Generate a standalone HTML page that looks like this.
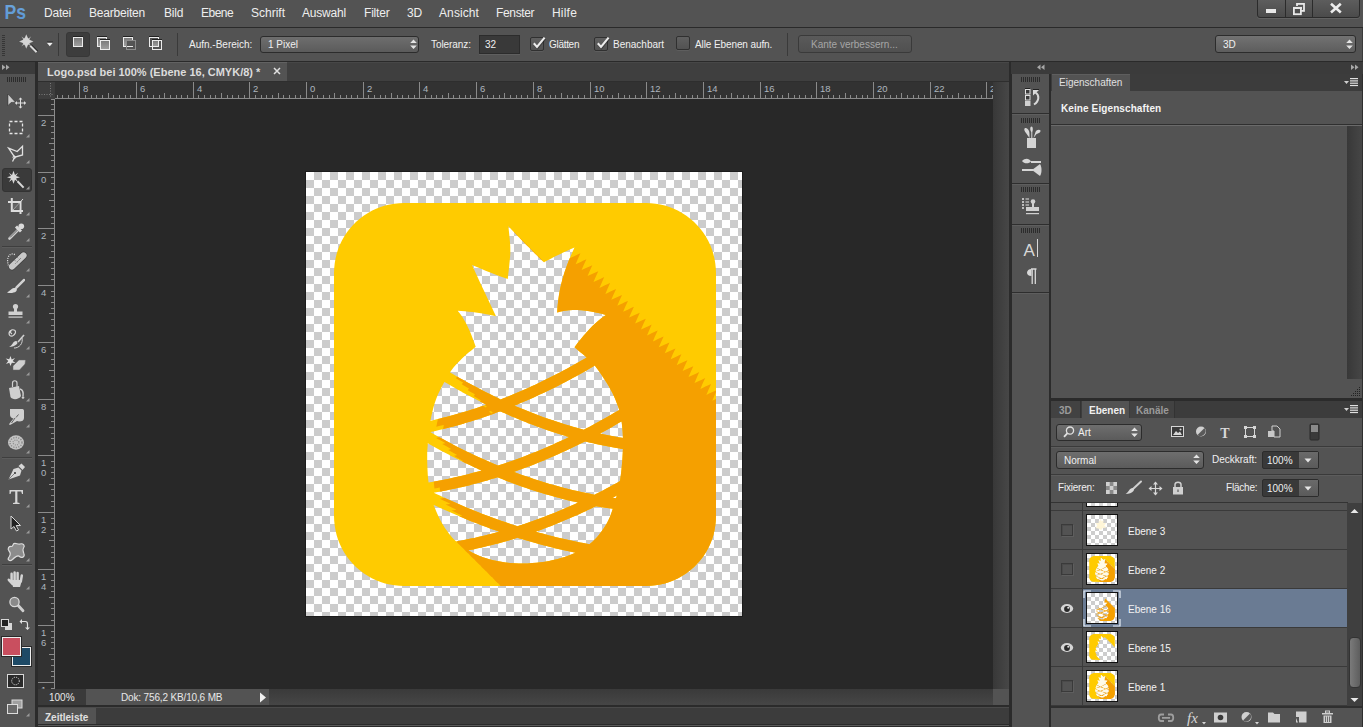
<!DOCTYPE html>
<html><head><meta charset="utf-8"><style>
html,body{margin:0;padding:0;width:1363px;height:727px;overflow:hidden;background:#2b2b2b}
div{position:absolute;box-sizing:border-box}
.t{font-family:"Liberation Sans", sans-serif;white-space:pre}
svg{overflow:visible}
</style></head><body>
<div style="left:0px;top:0px;width:1363px;height:27px;background:#535353"></div>
<div style="left:0px;top:27px;width:1363px;height:1px;background:#2a2a2a"></div>
<div style="left:0px;top:28px;width:1363px;height:33px;background:#535353"></div>
<div style="left:0px;top:61px;width:1363px;height:1px;background:#2a2a2a"></div>
<div style="left:0px;top:62px;width:1363px;height:665px;background:#2b2b2b"></div>
<div style="left:0px;top:62px;width:35px;height:12px;background:#3b3b3b"></div>
<div style="left:0px;top:74px;width:35px;height:653px;background:#535353"></div>
<div style="left:38px;top:62px;width:971px;height:20px;background:#3f3f3f"></div>
<div style="left:38px;top:62px;width:971px;height:1px;background:#474747"></div>
<div style="left:38px;top:62px;width:249px;height:19px;background:#535353"></div>
<div style="left:38px;top:62px;width:249px;height:1px;background:#626262"></div>
<div style="left:38px;top:81px;width:971px;height:1px;background:#2e2e2e"></div>
<div style="left:38px;top:82px;width:955px;height:17px;background:#323232"></div>
<div style="left:38px;top:99px;width:17px;height:590px;background:#323232"></div>
<div style="left:38px;top:82px;width:17px;height:17px;background:#3d3d3d"></div>
<div style="left:55px;top:99px;width:938px;height:590px;background:#282828"></div>
<div style="left:993px;top:82px;width:16px;height:607px;background:linear-gradient(90deg,#383838,#474747)"></div>
<div style="left:38px;top:689px;width:955px;height:16px;background:linear-gradient(180deg,#3a3a3a,#464646)"></div>
<div style="left:38px;top:689px;width:48px;height:16px;background:#3a3a3a"></div>
<div style="left:86px;top:689px;width:183px;height:16px;background:#535353"></div>
<div style="left:993px;top:689px;width:16px;height:16px;background:#535353"></div>
<div style="left:38px;top:707px;width:971px;height:1px;background:#4a4a4a"></div>
<div style="left:38px;top:708px;width:971px;height:16px;background:#3c3c3c"></div>
<div style="left:38px;top:708px;width:58px;height:16px;background:#535353"></div>
<div style="left:38px;top:725px;width:971px;height:1px;background:#5a5a5a"></div>
<div style="left:1011px;top:62px;width:352px;height:12px;background:#3b3b3b"></div>
<div style="left:1012px;top:74px;width:37px;height:653px;background:#535353"></div>
<div style="left:1051px;top:74px;width:312px;height:17px;background:#3c3c3c"></div>
<div style="left:1052px;top:74px;width:78px;height:17px;background:#535353"></div>
<div style="left:1051px;top:91px;width:312px;height:307px;background:#535353"></div>
<div style="left:1051px;top:401px;width:312px;height:17px;background:#3c3c3c"></div>
<div style="left:1051px;top:418px;width:312px;height:309px;background:#535353"></div>
<div style="left:55px;top:82px;width:938px;height:17px;overflow:hidden"><svg style="position:absolute;left:0;top:0" width="938" height="17"><rect x="0" y="16" width="938" height="1" fill="#8a8a8a"/><rect x="2" y="13" width="1" height="3" fill="#8a8a8a"/><rect x="7" y="13" width="1" height="3" fill="#8a8a8a"/><rect x="13" y="13" width="1" height="3" fill="#8a8a8a"/><rect x="19" y="13" width="1" height="3" fill="#8a8a8a"/><rect x="24" y="0" width="1" height="16" fill="#8a8a8a"/><text x="28" y="10" font-family="Liberation Sans" font-size="9.5" fill="#aeb6bf">8</text><rect x="30" y="13" width="1" height="3" fill="#8a8a8a"/><rect x="36" y="13" width="1" height="3" fill="#8a8a8a"/><rect x="41" y="13" width="1" height="3" fill="#8a8a8a"/><rect x="47" y="13" width="1" height="3" fill="#8a8a8a"/><rect x="53" y="11" width="1" height="5" fill="#8a8a8a"/><rect x="58" y="13" width="1" height="3" fill="#8a8a8a"/><rect x="64" y="13" width="1" height="3" fill="#8a8a8a"/><rect x="70" y="13" width="1" height="3" fill="#8a8a8a"/><rect x="75" y="13" width="1" height="3" fill="#8a8a8a"/><rect x="81" y="0" width="1" height="16" fill="#8a8a8a"/><text x="85" y="10" font-family="Liberation Sans" font-size="9.5" fill="#aeb6bf">6</text><rect x="87" y="13" width="1" height="3" fill="#8a8a8a"/><rect x="92" y="13" width="1" height="3" fill="#8a8a8a"/><rect x="98" y="13" width="1" height="3" fill="#8a8a8a"/><rect x="104" y="13" width="1" height="3" fill="#8a8a8a"/><rect x="109" y="11" width="1" height="5" fill="#8a8a8a"/><rect x="115" y="13" width="1" height="3" fill="#8a8a8a"/><rect x="121" y="13" width="1" height="3" fill="#8a8a8a"/><rect x="126" y="13" width="1" height="3" fill="#8a8a8a"/><rect x="132" y="13" width="1" height="3" fill="#8a8a8a"/><rect x="138" y="0" width="1" height="16" fill="#8a8a8a"/><text x="142" y="10" font-family="Liberation Sans" font-size="9.5" fill="#aeb6bf">4</text><rect x="143" y="13" width="1" height="3" fill="#8a8a8a"/><rect x="149" y="13" width="1" height="3" fill="#8a8a8a"/><rect x="155" y="13" width="1" height="3" fill="#8a8a8a"/><rect x="160" y="13" width="1" height="3" fill="#8a8a8a"/><rect x="166" y="11" width="1" height="5" fill="#8a8a8a"/><rect x="172" y="13" width="1" height="3" fill="#8a8a8a"/><rect x="177" y="13" width="1" height="3" fill="#8a8a8a"/><rect x="183" y="13" width="1" height="3" fill="#8a8a8a"/><rect x="189" y="13" width="1" height="3" fill="#8a8a8a"/><rect x="194" y="0" width="1" height="16" fill="#8a8a8a"/><text x="198" y="10" font-family="Liberation Sans" font-size="9.5" fill="#aeb6bf">2</text><rect x="200" y="13" width="1" height="3" fill="#8a8a8a"/><rect x="206" y="13" width="1" height="3" fill="#8a8a8a"/><rect x="211" y="13" width="1" height="3" fill="#8a8a8a"/><rect x="217" y="13" width="1" height="3" fill="#8a8a8a"/><rect x="223" y="11" width="1" height="5" fill="#8a8a8a"/><rect x="228" y="13" width="1" height="3" fill="#8a8a8a"/><rect x="234" y="13" width="1" height="3" fill="#8a8a8a"/><rect x="240" y="13" width="1" height="3" fill="#8a8a8a"/><rect x="245" y="13" width="1" height="3" fill="#8a8a8a"/><rect x="251" y="0" width="1" height="16" fill="#8a8a8a"/><text x="255" y="10" font-family="Liberation Sans" font-size="9.5" fill="#aeb6bf">0</text><rect x="257" y="13" width="1" height="3" fill="#8a8a8a"/><rect x="262" y="13" width="1" height="3" fill="#8a8a8a"/><rect x="268" y="13" width="1" height="3" fill="#8a8a8a"/><rect x="274" y="13" width="1" height="3" fill="#8a8a8a"/><rect x="279" y="11" width="1" height="5" fill="#8a8a8a"/><rect x="285" y="13" width="1" height="3" fill="#8a8a8a"/><rect x="291" y="13" width="1" height="3" fill="#8a8a8a"/><rect x="296" y="13" width="1" height="3" fill="#8a8a8a"/><rect x="302" y="13" width="1" height="3" fill="#8a8a8a"/><rect x="308" y="0" width="1" height="16" fill="#8a8a8a"/><text x="312" y="10" font-family="Liberation Sans" font-size="9.5" fill="#aeb6bf">2</text><rect x="313" y="13" width="1" height="3" fill="#8a8a8a"/><rect x="319" y="13" width="1" height="3" fill="#8a8a8a"/><rect x="325" y="13" width="1" height="3" fill="#8a8a8a"/><rect x="330" y="13" width="1" height="3" fill="#8a8a8a"/><rect x="336" y="11" width="1" height="5" fill="#8a8a8a"/><rect x="342" y="13" width="1" height="3" fill="#8a8a8a"/><rect x="347" y="13" width="1" height="3" fill="#8a8a8a"/><rect x="353" y="13" width="1" height="3" fill="#8a8a8a"/><rect x="359" y="13" width="1" height="3" fill="#8a8a8a"/><rect x="364" y="0" width="1" height="16" fill="#8a8a8a"/><text x="368" y="10" font-family="Liberation Sans" font-size="9.5" fill="#aeb6bf">4</text><rect x="370" y="13" width="1" height="3" fill="#8a8a8a"/><rect x="376" y="13" width="1" height="3" fill="#8a8a8a"/><rect x="381" y="13" width="1" height="3" fill="#8a8a8a"/><rect x="387" y="13" width="1" height="3" fill="#8a8a8a"/><rect x="393" y="11" width="1" height="5" fill="#8a8a8a"/><rect x="398" y="13" width="1" height="3" fill="#8a8a8a"/><rect x="404" y="13" width="1" height="3" fill="#8a8a8a"/><rect x="410" y="13" width="1" height="3" fill="#8a8a8a"/><rect x="415" y="13" width="1" height="3" fill="#8a8a8a"/><rect x="421" y="0" width="1" height="16" fill="#8a8a8a"/><text x="425" y="10" font-family="Liberation Sans" font-size="9.5" fill="#aeb6bf">6</text><rect x="427" y="13" width="1" height="3" fill="#8a8a8a"/><rect x="432" y="13" width="1" height="3" fill="#8a8a8a"/><rect x="438" y="13" width="1" height="3" fill="#8a8a8a"/><rect x="444" y="13" width="1" height="3" fill="#8a8a8a"/><rect x="449" y="11" width="1" height="5" fill="#8a8a8a"/><rect x="455" y="13" width="1" height="3" fill="#8a8a8a"/><rect x="461" y="13" width="1" height="3" fill="#8a8a8a"/><rect x="466" y="13" width="1" height="3" fill="#8a8a8a"/><rect x="472" y="13" width="1" height="3" fill="#8a8a8a"/><rect x="478" y="0" width="1" height="16" fill="#8a8a8a"/><text x="482" y="10" font-family="Liberation Sans" font-size="9.5" fill="#aeb6bf">8</text><rect x="483" y="13" width="1" height="3" fill="#8a8a8a"/><rect x="489" y="13" width="1" height="3" fill="#8a8a8a"/><rect x="495" y="13" width="1" height="3" fill="#8a8a8a"/><rect x="500" y="13" width="1" height="3" fill="#8a8a8a"/><rect x="506" y="11" width="1" height="5" fill="#8a8a8a"/><rect x="512" y="13" width="1" height="3" fill="#8a8a8a"/><rect x="517" y="13" width="1" height="3" fill="#8a8a8a"/><rect x="523" y="13" width="1" height="3" fill="#8a8a8a"/><rect x="529" y="13" width="1" height="3" fill="#8a8a8a"/><rect x="535" y="0" width="1" height="16" fill="#8a8a8a"/><text x="539" y="10" font-family="Liberation Sans" font-size="9.5" fill="#aeb6bf">10</text><rect x="540" y="13" width="1" height="3" fill="#8a8a8a"/><rect x="546" y="13" width="1" height="3" fill="#8a8a8a"/><rect x="552" y="13" width="1" height="3" fill="#8a8a8a"/><rect x="557" y="13" width="1" height="3" fill="#8a8a8a"/><rect x="563" y="11" width="1" height="5" fill="#8a8a8a"/><rect x="569" y="13" width="1" height="3" fill="#8a8a8a"/><rect x="574" y="13" width="1" height="3" fill="#8a8a8a"/><rect x="580" y="13" width="1" height="3" fill="#8a8a8a"/><rect x="586" y="13" width="1" height="3" fill="#8a8a8a"/><rect x="591" y="0" width="1" height="16" fill="#8a8a8a"/><text x="595" y="10" font-family="Liberation Sans" font-size="9.5" fill="#aeb6bf">12</text><rect x="597" y="13" width="1" height="3" fill="#8a8a8a"/><rect x="603" y="13" width="1" height="3" fill="#8a8a8a"/><rect x="608" y="13" width="1" height="3" fill="#8a8a8a"/><rect x="614" y="13" width="1" height="3" fill="#8a8a8a"/><rect x="620" y="11" width="1" height="5" fill="#8a8a8a"/><rect x="625" y="13" width="1" height="3" fill="#8a8a8a"/><rect x="631" y="13" width="1" height="3" fill="#8a8a8a"/><rect x="637" y="13" width="1" height="3" fill="#8a8a8a"/><rect x="642" y="13" width="1" height="3" fill="#8a8a8a"/><rect x="648" y="0" width="1" height="16" fill="#8a8a8a"/><text x="652" y="10" font-family="Liberation Sans" font-size="9.5" fill="#aeb6bf">14</text><rect x="654" y="13" width="1" height="3" fill="#8a8a8a"/><rect x="659" y="13" width="1" height="3" fill="#8a8a8a"/><rect x="665" y="13" width="1" height="3" fill="#8a8a8a"/><rect x="671" y="13" width="1" height="3" fill="#8a8a8a"/><rect x="676" y="11" width="1" height="5" fill="#8a8a8a"/><rect x="682" y="13" width="1" height="3" fill="#8a8a8a"/><rect x="688" y="13" width="1" height="3" fill="#8a8a8a"/><rect x="693" y="13" width="1" height="3" fill="#8a8a8a"/><rect x="699" y="13" width="1" height="3" fill="#8a8a8a"/><rect x="705" y="0" width="1" height="16" fill="#8a8a8a"/><text x="709" y="10" font-family="Liberation Sans" font-size="9.5" fill="#aeb6bf">16</text><rect x="710" y="13" width="1" height="3" fill="#8a8a8a"/><rect x="716" y="13" width="1" height="3" fill="#8a8a8a"/><rect x="722" y="13" width="1" height="3" fill="#8a8a8a"/><rect x="727" y="13" width="1" height="3" fill="#8a8a8a"/><rect x="733" y="11" width="1" height="5" fill="#8a8a8a"/><rect x="739" y="13" width="1" height="3" fill="#8a8a8a"/><rect x="744" y="13" width="1" height="3" fill="#8a8a8a"/><rect x="750" y="13" width="1" height="3" fill="#8a8a8a"/><rect x="756" y="13" width="1" height="3" fill="#8a8a8a"/><rect x="761" y="0" width="1" height="16" fill="#8a8a8a"/><text x="765" y="10" font-family="Liberation Sans" font-size="9.5" fill="#aeb6bf">18</text><rect x="767" y="13" width="1" height="3" fill="#8a8a8a"/><rect x="773" y="13" width="1" height="3" fill="#8a8a8a"/><rect x="778" y="13" width="1" height="3" fill="#8a8a8a"/><rect x="784" y="13" width="1" height="3" fill="#8a8a8a"/><rect x="790" y="11" width="1" height="5" fill="#8a8a8a"/><rect x="795" y="13" width="1" height="3" fill="#8a8a8a"/><rect x="801" y="13" width="1" height="3" fill="#8a8a8a"/><rect x="807" y="13" width="1" height="3" fill="#8a8a8a"/><rect x="812" y="13" width="1" height="3" fill="#8a8a8a"/><rect x="818" y="0" width="1" height="16" fill="#8a8a8a"/><text x="822" y="10" font-family="Liberation Sans" font-size="9.5" fill="#aeb6bf">20</text><rect x="824" y="13" width="1" height="3" fill="#8a8a8a"/><rect x="829" y="13" width="1" height="3" fill="#8a8a8a"/><rect x="835" y="13" width="1" height="3" fill="#8a8a8a"/><rect x="841" y="13" width="1" height="3" fill="#8a8a8a"/><rect x="846" y="11" width="1" height="5" fill="#8a8a8a"/><rect x="852" y="13" width="1" height="3" fill="#8a8a8a"/><rect x="858" y="13" width="1" height="3" fill="#8a8a8a"/><rect x="863" y="13" width="1" height="3" fill="#8a8a8a"/><rect x="869" y="13" width="1" height="3" fill="#8a8a8a"/><rect x="875" y="0" width="1" height="16" fill="#8a8a8a"/><text x="879" y="10" font-family="Liberation Sans" font-size="9.5" fill="#aeb6bf">22</text><rect x="880" y="13" width="1" height="3" fill="#8a8a8a"/><rect x="886" y="13" width="1" height="3" fill="#8a8a8a"/><rect x="892" y="13" width="1" height="3" fill="#8a8a8a"/><rect x="897" y="13" width="1" height="3" fill="#8a8a8a"/><rect x="903" y="11" width="1" height="5" fill="#8a8a8a"/><rect x="909" y="13" width="1" height="3" fill="#8a8a8a"/><rect x="914" y="13" width="1" height="3" fill="#8a8a8a"/><rect x="920" y="13" width="1" height="3" fill="#8a8a8a"/><rect x="926" y="13" width="1" height="3" fill="#8a8a8a"/><rect x="931" y="0" width="1" height="16" fill="#8a8a8a"/><text x="935" y="10" font-family="Liberation Sans" font-size="9.5" fill="#aeb6bf">24</text><rect x="937" y="13" width="1" height="3" fill="#8a8a8a"/></svg></div>
<div style="left:38px;top:99px;width:17px;height:590px;overflow:hidden"><svg style="position:absolute;left:0;top:0" width="17" height="590"><rect x="16" y="0" width="1" height="590" fill="#8a8a8a"/><rect x="13" y="-28" width="3" height="1" fill="#8a8a8a"/><rect x="13" y="-23" width="3" height="1" fill="#8a8a8a"/><rect x="13" y="-17" width="3" height="1" fill="#8a8a8a"/><rect x="11" y="-11" width="5" height="1" fill="#8a8a8a"/><rect x="13" y="-6" width="3" height="1" fill="#8a8a8a"/><rect x="13" y="0" width="3" height="1" fill="#8a8a8a"/><rect x="13" y="5" width="3" height="1" fill="#8a8a8a"/><rect x="13" y="10" width="3" height="1" fill="#8a8a8a"/><rect x="0" y="16" width="16" height="1" fill="#8a8a8a"/><text x="3" y="27" font-family="Liberation Sans" font-size="9.5" fill="#aeb6bf">2</text><rect x="13" y="22" width="3" height="1" fill="#8a8a8a"/><rect x="13" y="27" width="3" height="1" fill="#8a8a8a"/><rect x="13" y="33" width="3" height="1" fill="#8a8a8a"/><rect x="13" y="39" width="3" height="1" fill="#8a8a8a"/><rect x="11" y="44" width="5" height="1" fill="#8a8a8a"/><rect x="13" y="50" width="3" height="1" fill="#8a8a8a"/><rect x="13" y="56" width="3" height="1" fill="#8a8a8a"/><rect x="13" y="61" width="3" height="1" fill="#8a8a8a"/><rect x="13" y="67" width="3" height="1" fill="#8a8a8a"/><rect x="0" y="73" width="16" height="1" fill="#8a8a8a"/><text x="3" y="84" font-family="Liberation Sans" font-size="9.5" fill="#aeb6bf">0</text><rect x="13" y="78" width="3" height="1" fill="#8a8a8a"/><rect x="13" y="84" width="3" height="1" fill="#8a8a8a"/><rect x="13" y="90" width="3" height="1" fill="#8a8a8a"/><rect x="13" y="95" width="3" height="1" fill="#8a8a8a"/><rect x="11" y="101" width="5" height="1" fill="#8a8a8a"/><rect x="13" y="107" width="3" height="1" fill="#8a8a8a"/><rect x="13" y="112" width="3" height="1" fill="#8a8a8a"/><rect x="13" y="118" width="3" height="1" fill="#8a8a8a"/><rect x="13" y="124" width="3" height="1" fill="#8a8a8a"/><rect x="0" y="129" width="16" height="1" fill="#8a8a8a"/><text x="3" y="140" font-family="Liberation Sans" font-size="9.5" fill="#aeb6bf">2</text><rect x="13" y="135" width="3" height="1" fill="#8a8a8a"/><rect x="13" y="141" width="3" height="1" fill="#8a8a8a"/><rect x="13" y="146" width="3" height="1" fill="#8a8a8a"/><rect x="13" y="152" width="3" height="1" fill="#8a8a8a"/><rect x="11" y="158" width="5" height="1" fill="#8a8a8a"/><rect x="13" y="163" width="3" height="1" fill="#8a8a8a"/><rect x="13" y="169" width="3" height="1" fill="#8a8a8a"/><rect x="13" y="175" width="3" height="1" fill="#8a8a8a"/><rect x="13" y="180" width="3" height="1" fill="#8a8a8a"/><rect x="0" y="186" width="16" height="1" fill="#8a8a8a"/><text x="3" y="197" font-family="Liberation Sans" font-size="9.5" fill="#aeb6bf">4</text><rect x="13" y="192" width="3" height="1" fill="#8a8a8a"/><rect x="13" y="197" width="3" height="1" fill="#8a8a8a"/><rect x="13" y="203" width="3" height="1" fill="#8a8a8a"/><rect x="13" y="209" width="3" height="1" fill="#8a8a8a"/><rect x="11" y="214" width="5" height="1" fill="#8a8a8a"/><rect x="13" y="220" width="3" height="1" fill="#8a8a8a"/><rect x="13" y="226" width="3" height="1" fill="#8a8a8a"/><rect x="13" y="231" width="3" height="1" fill="#8a8a8a"/><rect x="13" y="237" width="3" height="1" fill="#8a8a8a"/><rect x="0" y="243" width="16" height="1" fill="#8a8a8a"/><text x="3" y="254" font-family="Liberation Sans" font-size="9.5" fill="#aeb6bf">6</text><rect x="13" y="248" width="3" height="1" fill="#8a8a8a"/><rect x="13" y="254" width="3" height="1" fill="#8a8a8a"/><rect x="13" y="260" width="3" height="1" fill="#8a8a8a"/><rect x="13" y="265" width="3" height="1" fill="#8a8a8a"/><rect x="11" y="271" width="5" height="1" fill="#8a8a8a"/><rect x="13" y="277" width="3" height="1" fill="#8a8a8a"/><rect x="13" y="282" width="3" height="1" fill="#8a8a8a"/><rect x="13" y="288" width="3" height="1" fill="#8a8a8a"/><rect x="13" y="294" width="3" height="1" fill="#8a8a8a"/><rect x="0" y="300" width="16" height="1" fill="#8a8a8a"/><text x="3" y="311" font-family="Liberation Sans" font-size="9.5" fill="#aeb6bf">8</text><rect x="13" y="305" width="3" height="1" fill="#8a8a8a"/><rect x="13" y="311" width="3" height="1" fill="#8a8a8a"/><rect x="13" y="317" width="3" height="1" fill="#8a8a8a"/><rect x="13" y="322" width="3" height="1" fill="#8a8a8a"/><rect x="11" y="328" width="5" height="1" fill="#8a8a8a"/><rect x="13" y="334" width="3" height="1" fill="#8a8a8a"/><rect x="13" y="339" width="3" height="1" fill="#8a8a8a"/><rect x="13" y="345" width="3" height="1" fill="#8a8a8a"/><rect x="13" y="351" width="3" height="1" fill="#8a8a8a"/><rect x="0" y="356" width="16" height="1" fill="#8a8a8a"/><text x="3" y="367" font-family="Liberation Sans" font-size="9.5" fill="#aeb6bf">1</text><text x="3" y="377" font-family="Liberation Sans" font-size="9.5" fill="#aeb6bf">0</text><rect x="13" y="362" width="3" height="1" fill="#8a8a8a"/><rect x="13" y="368" width="3" height="1" fill="#8a8a8a"/><rect x="13" y="373" width="3" height="1" fill="#8a8a8a"/><rect x="13" y="379" width="3" height="1" fill="#8a8a8a"/><rect x="11" y="385" width="5" height="1" fill="#8a8a8a"/><rect x="13" y="390" width="3" height="1" fill="#8a8a8a"/><rect x="13" y="396" width="3" height="1" fill="#8a8a8a"/><rect x="13" y="402" width="3" height="1" fill="#8a8a8a"/><rect x="13" y="407" width="3" height="1" fill="#8a8a8a"/><rect x="0" y="413" width="16" height="1" fill="#8a8a8a"/><text x="3" y="424" font-family="Liberation Sans" font-size="9.5" fill="#aeb6bf">1</text><text x="3" y="434" font-family="Liberation Sans" font-size="9.5" fill="#aeb6bf">2</text><rect x="13" y="419" width="3" height="1" fill="#8a8a8a"/><rect x="13" y="424" width="3" height="1" fill="#8a8a8a"/><rect x="13" y="430" width="3" height="1" fill="#8a8a8a"/><rect x="13" y="436" width="3" height="1" fill="#8a8a8a"/><rect x="11" y="441" width="5" height="1" fill="#8a8a8a"/><rect x="13" y="447" width="3" height="1" fill="#8a8a8a"/><rect x="13" y="453" width="3" height="1" fill="#8a8a8a"/><rect x="13" y="458" width="3" height="1" fill="#8a8a8a"/><rect x="13" y="464" width="3" height="1" fill="#8a8a8a"/><rect x="0" y="470" width="16" height="1" fill="#8a8a8a"/><text x="3" y="481" font-family="Liberation Sans" font-size="9.5" fill="#aeb6bf">1</text><text x="3" y="491" font-family="Liberation Sans" font-size="9.5" fill="#aeb6bf">4</text><rect x="13" y="475" width="3" height="1" fill="#8a8a8a"/><rect x="13" y="481" width="3" height="1" fill="#8a8a8a"/><rect x="13" y="487" width="3" height="1" fill="#8a8a8a"/><rect x="13" y="492" width="3" height="1" fill="#8a8a8a"/><rect x="11" y="498" width="5" height="1" fill="#8a8a8a"/><rect x="13" y="504" width="3" height="1" fill="#8a8a8a"/><rect x="13" y="509" width="3" height="1" fill="#8a8a8a"/><rect x="13" y="515" width="3" height="1" fill="#8a8a8a"/><rect x="13" y="521" width="3" height="1" fill="#8a8a8a"/><rect x="0" y="526" width="16" height="1" fill="#8a8a8a"/><text x="3" y="537" font-family="Liberation Sans" font-size="9.5" fill="#aeb6bf">1</text><text x="3" y="547" font-family="Liberation Sans" font-size="9.5" fill="#aeb6bf">6</text><rect x="13" y="532" width="3" height="1" fill="#8a8a8a"/><rect x="13" y="538" width="3" height="1" fill="#8a8a8a"/><rect x="13" y="543" width="3" height="1" fill="#8a8a8a"/><rect x="13" y="549" width="3" height="1" fill="#8a8a8a"/><rect x="11" y="555" width="5" height="1" fill="#8a8a8a"/><rect x="13" y="560" width="3" height="1" fill="#8a8a8a"/><rect x="13" y="566" width="3" height="1" fill="#8a8a8a"/><rect x="13" y="572" width="3" height="1" fill="#8a8a8a"/><rect x="13" y="577" width="3" height="1" fill="#8a8a8a"/><rect x="0" y="583" width="16" height="1" fill="#8a8a8a"/><text x="3" y="594" font-family="Liberation Sans" font-size="9.5" fill="#aeb6bf">1</text><text x="3" y="604" font-family="Liberation Sans" font-size="9.5" fill="#aeb6bf">8</text><rect x="13" y="589" width="3" height="1" fill="#8a8a8a"/><rect x="13" y="594" width="3" height="1" fill="#8a8a8a"/></svg></div>
<svg style="position:absolute;left:0px;top:0px;" width="60" height="100" viewBox="0 0 60 100"><rect x="38" y="82" width="16" height="16" fill="#3e3e3e"/><path d="M50.5 83 V97 M39 94.5 H53" stroke="#7a7a7a" stroke-width="1" stroke-dasharray="1 1.5"/></svg>
<svg style="position:absolute;left:0px;top:0px;" width="34" height="26" viewBox="0 0 34 26"><defs><linearGradient id="psg" x1="0" y1="0" x2="0" y2="1"><stop offset="0" stop-color="#6fa6dc"/><stop offset="1" stop-color="#5895d4"/></linearGradient></defs><text x="4.5" y="19.2" font-family="Liberation Sans" font-weight="bold" font-size="21" fill="url(#psg)" textLength="21.5" lengthAdjust="spacingAndGlyphs">Ps</text></svg>
<div class="t" style="left:44px;top:6.84px;font-size:12px;line-height:12px;color:#eeeeee;font-weight:normal;letter-spacing:-0.2px">Datei</div>
<div class="t" style="left:89px;top:6.84px;font-size:12px;line-height:12px;color:#eeeeee;font-weight:normal;letter-spacing:-0.2px">Bearbeiten</div>
<div class="t" style="left:164px;top:6.84px;font-size:12px;line-height:12px;color:#eeeeee;font-weight:normal;letter-spacing:-0.2px">Bild</div>
<div class="t" style="left:201px;top:6.84px;font-size:12px;line-height:12px;color:#eeeeee;font-weight:normal;letter-spacing:-0.5px">Ebene</div>
<div class="t" style="left:251px;top:6.84px;font-size:12px;line-height:12px;color:#eeeeee;font-weight:normal;letter-spacing:0px">Schrift</div>
<div class="t" style="left:302px;top:6.84px;font-size:12px;line-height:12px;color:#eeeeee;font-weight:normal;letter-spacing:-0.2px">Auswahl</div>
<div class="t" style="left:364px;top:6.84px;font-size:12px;line-height:12px;color:#eeeeee;font-weight:normal;letter-spacing:-0.2px">Filter</div>
<div class="t" style="left:407px;top:6.84px;font-size:12px;line-height:12px;color:#eeeeee;font-weight:normal;letter-spacing:-0.2px">3D</div>
<div class="t" style="left:439px;top:6.84px;font-size:12px;line-height:12px;color:#eeeeee;font-weight:normal;letter-spacing:0.1px">Ansicht</div>
<div class="t" style="left:496px;top:6.84px;font-size:12px;line-height:12px;color:#eeeeee;font-weight:normal;letter-spacing:-0.35px">Fenster</div>
<div class="t" style="left:552px;top:6.84px;font-size:12px;line-height:12px;color:#eeeeee;font-weight:normal;letter-spacing:0.2px">Hilfe</div>
<div style="left:1257px;top:-3px;width:103px;height:21px;background:linear-gradient(#5f5f5f,#4b4b4b);border:1px solid #2b2b2b;border-radius:0 0 3px 3px;box-shadow:0 1px 0 #626262"></div>
<div style="left:1285px;top:0px;width:1px;height:17px;background:#2b2b2b"></div>
<div style="left:1312px;top:0px;width:1px;height:17px;background:#2b2b2b"></div>
<div style="left:1266px;top:9px;width:10px;height:4px;background:#e8e8e8"></div>
<svg style="position:absolute;left:1292px;top:2px;" width="14" height="13" viewBox="0 0 14 13"><rect x="5" y="1.9" width="7" height="7" fill="none" stroke="#e8e8e8" stroke-width="1.8"/><rect x="0" y="4" width="9" height="8.5" fill="#4f4f4f"/><rect x="1.9" y="5.8" width="7" height="6.4" fill="none" stroke="#e8e8e8" stroke-width="1.8"/><rect x="1" y="5" width="9" height="2" fill="#e8e8e8"/></svg>
<svg style="position:absolute;left:1330px;top:3px;" width="12" height="10" viewBox="0 0 12 10"><path d="M1 0.8 L10.8 9.5 M10.8 0.8 L1 9.5" stroke="#ececec" stroke-width="2.6"/></svg>
<svg style="position:absolute;left:2px;top:35px;" width="3" height="21" viewBox="0 0 3 21"><rect x="0" y="0" width="3" height="1" fill="#363636"/><rect x="0" y="2" width="3" height="1" fill="#363636"/><rect x="0" y="4" width="3" height="1" fill="#363636"/><rect x="0" y="6" width="3" height="1" fill="#363636"/><rect x="0" y="8" width="3" height="1" fill="#363636"/><rect x="0" y="10" width="3" height="1" fill="#363636"/><rect x="0" y="12" width="3" height="1" fill="#363636"/><rect x="0" y="14" width="3" height="1" fill="#363636"/><rect x="0" y="16" width="3" height="1" fill="#363636"/><rect x="0" y="18" width="3" height="1" fill="#363636"/><rect x="0" y="20" width="3" height="1" fill="#363636"/></svg>
<svg style="position:absolute;left:16px;top:32px;" width="24" height="24" viewBox="0 0 24 24"><g transform="translate(10.3,9.4)">
<path d="M0,-7.5 L2,-3 L5.3,-5.3 L3,-2 L7.5,0 L3,2 L5.3,5.3 L2,3 L0,7.5 L-2,3 L-5.3,5.3 L-3,2 L-7.5,0 L-3,-2 L-5.3,-5.3 L-2,-3Z" fill="#d4d4d4" stroke="#2a2a2a" stroke-width="0.5" stroke-opacity="0.5"/><circle r="3.5" fill="#d4d4d4"/></g>
<path d="M14.5 13.5 L21 20" stroke="#2a2a2a" stroke-width="3.2"/><path d="M14.2 13.8 L20.6 20.2" stroke="#dadada" stroke-width="2"/></svg>
<svg style="position:absolute;left:46px;top:41px;" width="8" height="6" viewBox="0 0 8 6"><rect x="1" y="0.6" width="6" height="1" fill="#222"/><path d="M0.8 1.8 L6.8 1.8 L3.8 5.2Z" fill="#f0f0f0"/></svg>
<div style="left:58px;top:33px;width:1px;height:23px;background:#3a3a3a"></div>
<div style="left:66px;top:32px;width:24px;height:25px;background:#3d3d3d;border:1px solid #373737;border-radius:3px"></div>
<svg style="position:absolute;left:64px;top:30px;" width="106" height="28" viewBox="0 0 106 28"><defs><linearGradient id="sqg" x1="0" y1="0" x2="0" y2="1"><stop offset="0" stop-color="#7a7a7a"/><stop offset="1" stop-color="#a0a0a0"/></linearGradient></defs><rect x="9.5" y="7.5" width="9" height="9" fill="url(#sqg)" stroke="#ececec" stroke-width="1"/><line x1="9" y1="6.5" x2="19" y2="6.5" stroke="#222" stroke-width="1"/><rect x="33.5" y="7.5" width="9" height="9" fill="url(#sqg)" stroke="#ececec" stroke-width="1"/><line x1="33" y1="6.5" x2="43" y2="6.5" stroke="#222" stroke-width="1"/><rect x="36.5" y="10.5" width="9" height="9" fill="url(#sqg)" stroke="#ececec" stroke-width="1"/><line x1="36" y1="9.5" x2="46" y2="9.5" stroke="#222" stroke-width="1"/><rect x="62.5" y="10.5" width="9" height="9" fill="none" stroke="#8c8c8c"/><rect x="59.5" y="7.5" width="9" height="9" fill="url(#sqg)" stroke="#ececec" stroke-width="1"/><line x1="59" y1="6.5" x2="69" y2="6.5" stroke="#222" stroke-width="1"/><rect x="62" y="10" width="7" height="6" fill="#555"/><rect x="62.5" y="10.5" width="9" height="9" fill="none" stroke="#8c8c8c"/><rect x="88.5" y="10.5" width="6" height="6" fill="url(#sqg)"/><rect x="85.5" y="7.5" width="9" height="9" fill="none" stroke="#ececec" stroke-width="1"/><line x1="85" y1="6.5" x2="95" y2="6.5" stroke="#222" stroke-width="1"/><rect x="88.5" y="10.5" width="9" height="9" fill="none" stroke="#ececec" stroke-width="1"/><line x1="88" y1="9.5" x2="98" y2="9.5" stroke="#222" stroke-width="1"/></svg>
<div style="left:177px;top:33px;width:1px;height:23px;background:#3a3a3a"></div>
<div class="t" style="left:189px;top:39.53px;font-size:10px;line-height:10px;color:#f0f0f0;font-weight:normal;">Aufn.-Bereich:</div>
<div style="left:260px;top:36px;width:159px;height:17px;background:linear-gradient(#6e6e6e,#5b5b5b);border:1px solid #2c2c2c;border-radius:3px"></div>
<div class="t" style="left:268px;top:39.53px;font-size:10px;line-height:10px;color:#f0f0f0;font-weight:normal;">1 Pixel</div>
<svg style="position:absolute;left:410px;top:39px;" width="7" height="11" viewBox="0 0 7 11"><path d="M0.2 4 L3.5 0.5 L6.8 4Z M0.2 6.5 L3.5 10 L6.8 6.5Z" fill="#e4e4e4"/></svg>
<div class="t" style="left:431px;top:39.53px;font-size:10px;line-height:10px;color:#f0f0f0;font-weight:normal;letter-spacing:-0.08px">Toleranz:</div>
<div style="left:479px;top:35px;width:41px;height:19px;background:#393939;border:1px solid #2c2c2c;box-shadow:0 1px 0 #5f5f5f"></div>
<div class="t" style="left:485px;top:39.53px;font-size:10px;line-height:10px;color:#f0f0f0;font-weight:normal;">32</div>
<div style="left:530px;top:37px;width:14px;height:14px;background:linear-gradient(#606060,#525252);border:1px solid #303030;border-radius:2px;box-shadow:0 1px 0 #5e5e5e"></div>
<svg style="position:absolute;left:530px;top:35px;" width="16" height="16" viewBox="0 0 16 16"><path d="M3.8 8.6 L7 12.4 L14.8 3" fill="none" stroke="#222" stroke-width="2.4" opacity="0.45" transform="translate(0.4,0.6)"/><path d="M3.8 8.2 L7 11.9 L14.6 2.6" fill="none" stroke="#ececec" stroke-width="2.1"/></svg>
<div class="t" style="left:549px;top:39.53px;font-size:10px;line-height:10px;color:#f0f0f0;font-weight:normal;letter-spacing:-0.3px">Glätten</div>
<div style="left:594px;top:37px;width:14px;height:14px;background:linear-gradient(#606060,#525252);border:1px solid #303030;border-radius:2px;box-shadow:0 1px 0 #5e5e5e"></div>
<svg style="position:absolute;left:594px;top:35px;" width="16" height="16" viewBox="0 0 16 16"><path d="M3.8 8.6 L7 12.4 L14.8 3" fill="none" stroke="#222" stroke-width="2.4" opacity="0.45" transform="translate(0.4,0.6)"/><path d="M3.8 8.2 L7 11.9 L14.6 2.6" fill="none" stroke="#ececec" stroke-width="2.1"/></svg>
<div class="t" style="left:613px;top:39.53px;font-size:10px;line-height:10px;color:#f0f0f0;font-weight:normal;">Benachbart</div>
<div style="left:676px;top:36px;width:14px;height:14px;background:linear-gradient(#606060,#525252);border:1px solid #303030;border-radius:2px;box-shadow:0 1px 0 #5e5e5e"></div>
<div class="t" style="left:695px;top:39.53px;font-size:10px;line-height:10px;color:#f0f0f0;font-weight:normal;letter-spacing:-0.1px">Alle Ebenen aufn.</div>
<div style="left:787px;top:33px;width:1px;height:23px;background:#3a3a3a"></div>
<div style="left:798px;top:35px;width:114px;height:18px;background:linear-gradient(#5a5a5a,#505050);border:1px solid #3a3a3a;border-radius:3px"></div>
<div class="t" style="left:811px;top:39.53px;font-size:10px;line-height:10px;color:#a6a6a6;font-weight:normal;">Kante verbessern...</div>
<div style="left:1215px;top:35px;width:141px;height:18px;background:linear-gradient(#727272,#5d5d5d);border:1px solid #2c2c2c;border-radius:3px"></div>
<div class="t" style="left:1223px;top:39.53px;font-size:10px;line-height:10px;color:#f0f0f0;font-weight:normal;">3D</div>
<svg style="position:absolute;left:1346px;top:39px;" width="7" height="11" viewBox="0 0 7 11"><path d="M0.2 4 L3.5 0.5 L6.8 4Z M0.2 6.5 L3.5 10 L6.8 6.5Z" fill="#e4e4e4"/></svg>
<div class="t" style="left:47px;top:66.69px;font-size:11px;line-height:11px;color:#dcdcdc;font-weight:bold;">Logo.psd bei 100% (Ebene 16, CMYK/8) *</div>
<svg style="position:absolute;left:273px;top:67px;" width="8" height="8" viewBox="0 0 8 8"><path d="M1 1 L7 7 M7 1 L1 7" stroke="#e0e0e0" stroke-width="1.5"/></svg>
<div class="t" style="left:49px;top:692.53px;font-size:10px;line-height:10px;color:#e8e8e8;font-weight:normal;">100%</div>
<div class="t" style="left:121px;top:692.53px;font-size:10px;line-height:10px;color:#e8e8e8;font-weight:normal;letter-spacing:-0.15px">Dok: 756,2 KB/10,6 MB</div>
<svg style="position:absolute;left:259px;top:692px;" width="8" height="11" viewBox="0 0 8 11"><path d="M1 0.5 L7 5.5 L1 10.5Z" fill="#f0f0f0"/></svg>
<div class="t" style="left:45px;top:712.53px;font-size:10px;line-height:10px;color:#e0e0e0;font-weight:bold;">Zeitleiste</div>
<div class="t" style="left:1059px;top:77.53px;font-size:10px;line-height:10px;color:#e0e0e0;font-weight:normal;">Eigenschaften</div>
<div class="t" style="left:1061px;top:103.53px;font-size:10px;line-height:10px;color:#f4f4f4;font-weight:bold;letter-spacing:0.1px">Keine Eigenschaften</div>
<svg style="position:absolute;left:2px;top:64px;" width="9" height="7" viewBox="0 0 9 7"><path d="M0 0.5 L3.5 3.2 L0 6Z M4 0.5 L7.5 3.2 L4 6Z" fill="#a8a8a8"/></svg>
<svg style="position:absolute;left:7px;top:77px;" width="20" height="5" viewBox="0 0 20 5"><rect x="0" y="0" width="1" height="5" fill="#2c2c2c"/><rect x="2" y="0" width="1" height="5" fill="#2c2c2c"/><rect x="4" y="0" width="1" height="5" fill="#2c2c2c"/><rect x="6" y="0" width="1" height="5" fill="#2c2c2c"/><rect x="8" y="0" width="1" height="5" fill="#2c2c2c"/><rect x="10" y="0" width="1" height="5" fill="#2c2c2c"/><rect x="12" y="0" width="1" height="5" fill="#2c2c2c"/><rect x="14" y="0" width="1" height="5" fill="#2c2c2c"/><rect x="16" y="0" width="1" height="5" fill="#2c2c2c"/><rect x="18" y="0" width="1" height="5" fill="#2c2c2c"/></svg>
<div style="left:2px;top:246px;width:30px;height:1px;background:#3e3e3e;box-shadow:0 1px 0 #5c5c5c"></div>
<div style="left:2px;top:457px;width:30px;height:1px;background:#3e3e3e;box-shadow:0 1px 0 #5c5c5c"></div>
<div style="left:2px;top:564px;width:30px;height:1px;background:#3e3e3e;box-shadow:0 1px 0 #5c5c5c"></div>
<div style="left:2px;top:168px;width:30px;height:24px;background:#3a3a3a;border:1px solid #333;border-radius:3px"></div>
<svg style="position:absolute;left:0px;top:0px;" width="36" height="727" viewBox="0 0 36 727"><path d="M8 94 L8 105.5 L11 102.5 L15.5 102.2Z" fill="#cfcfcf" stroke="#2a2a2a" stroke-width="0.5"/><path d="M20.5 98 V108 M15.5 103 H25.5" stroke="#e0e0e0" stroke-width="1"/><path d="M20.5 97.5 L18.5 99.5 H22.5Z M20.5 108.5 L18.5 106.5 H22.5Z M15 103 L17 101 V105Z M26 103 L24 101 V105Z" fill="#e0e0e0"/><rect x="9.5" y="121.5" width="13" height="12" fill="none" stroke="#e6e6e6" stroke-width="1.3" stroke-dasharray="3 2"/><path d="M29.5 134 L29.5 137.5 L26 137.5Z" fill="#9a9a9a"/><path d="M8.6 148.2 L17.2 151.5 L22.5 146.4 L22.5 155 L14.7 157.2 Z M14.7 157.2 L12.5 161.5" fill="none" stroke="#e0e0e0" stroke-width="1.3"/><circle cx="14.3" cy="157.3" r="1.3" fill="none" stroke="#e0e0e0"/><path d="M29.5 160 L29.5 163.5 L26 163.5Z" fill="#9a9a9a"/><g transform="translate(13.5,177.3)"><path d="M0,-6.5 L1.5,-2.4 L4.6,-4.6 L2.5,-1.2 L6.5,0 L2.5,1.2 L4.6,4.6 L1.5,2.4 L0,6.5 L-1.5,2.4 L-4.6,4.6 L-2.5,1.2 L-6.5,0 L-2.5,-1.2 L-4.6,-4.6 L-1.5,-2.4Z" fill="#d8d8d8"/></g><path d="M17.5 181.3 L23.6 187.6" stroke="#d8d8d8" stroke-width="2"/><path d="M29.5 186 L29.5 189.5 L26 189.5Z" fill="#9a9a9a"/><path d="M11.8 198 V211 H23 M8 202 H20.5 V214" fill="none" stroke="#dedede" stroke-width="2"/><path d="M13 210 L23 199" stroke="#dedede" stroke-width="1"/><rect x="13" y="203.5" width="6.5" height="6" fill="#707070" opacity="0.6"/><path d="M29.5 212 L29.5 215.5 L26 215.5Z" fill="#9a9a9a"/><path d="M9.5 238.5 L18 230" stroke="#d0d0d0" stroke-width="2.6" stroke-linecap="round"/><path d="M10 237.5 L17.5 230" stroke="#555" stroke-width="0.9"/><path d="M16 226.5 L21 231.5" stroke="#dadada" stroke-width="3"/><circle cx="21.3" cy="226.3" r="2.8" fill="#dadada"/><path d="M29.5 238 L29.5 241.5 L26 241.5Z" fill="#9a9a9a"/><path d="M8.5 265.5 C6.5 260 8 254.5 12 254 C13.5 253.8 15 254.5 15.5 255.5" fill="none" stroke="#e8e8e8" stroke-width="1.2" stroke-dasharray="1 1.2"/><path d="M12 266.5 L23.5 255.5" stroke="#2a2a2a" stroke-width="7.5" stroke-linecap="round" opacity="0.5"/><path d="M12 266.5 L23.5 255.5" stroke="#c8c8c8" stroke-width="6.2" stroke-linecap="round"/><path d="M14.5 260 L17 262.5 M17.5 257.5 L20 260 M15.5 263.5 L18.5 260.5 M18.5 260.5 L21.5 257.5" stroke="#555" stroke-width="0.9" stroke-dasharray="0.9 1.6"/><path d="M29.5 268 L29.5 271.5 L26 271.5Z" fill="#9a9a9a"/><path d="M16.5 287.5 L24 280" stroke="#2a2a2a" stroke-width="3.6" stroke-linecap="round" opacity="0.6"/><path d="M16.5 287.5 L24 280" stroke="#cfcfcf" stroke-width="2.6" stroke-linecap="round"/><path d="M7 292.5 C10 293.5 14 293 16 291.5 C17.5 290 17 288 15.5 287.8 C12 287.5 10.5 291 7 292.5Z" fill="#d8d8d8"/><path d="M29.5 294 L29.5 297.5 L26 297.5Z" fill="#9a9a9a"/><circle cx="15.5" cy="306.5" r="2.6" fill="#d0d0d0"/><path d="M14 308 H17 V311.5 H22.5 V315 H8.5 V311.5 H14Z" fill="#d0d0d0"/><rect x="8.5" y="316.5" width="14" height="1.2" fill="#d0d0d0"/><path d="M29.5 320 L29.5 323.5 L26 323.5Z" fill="#9a9a9a"/><path d="M12 334 C9 332 11 329 14 330 C17 331 15 335 12.5 336 C8 337 8 331 12 330" fill="none" stroke="#d8d8d8" stroke-width="1.2"/><path d="M18 342 L24 335" stroke="#d0d0d0" stroke-width="1.6"/><path d="M9 347 C12 347 15 346 17 344 C18 342.5 17 341 16 341 C13 341 13 345 9 347Z" fill="#d8d8d8"/><path d="M22 338 A8 8 0 0 1 14 348" fill="none" stroke="#cfcfcf" stroke-width="1"/><path d="M29.5 346 L29.5 349.5 L26 349.5Z" fill="#9a9a9a"/><g transform="translate(10.5,361)"><path d="M0,-5 L1.2,-1.6 L4.5,-3 L2.2,0 L5,2 L1.3,1.8 L0,5 L-1.2,1.8 L-4.5,3 L-2.2,0 L-4.8,-2.5 L-1.3,-1.8Z" fill="#e0e0e0"/></g><path d="M13 366 L19 360 H25.5 L25 364 L19.5 370 H13Z" fill="#cfcfcf" stroke="#666" stroke-width="0.5"/><path d="M29.5 372 L29.5 375.5 L26 375.5Z" fill="#9a9a9a"/><path d="M9 388 L19 386 L21 396 C19 400 12 400 10.5 397Z" fill="#cfcfcf"/><path d="M12.5 387 V383 C12.5 380 17 380 17 383 V389" fill="none" stroke="#cfcfcf" stroke-width="1.2"/><path d="M20 389 C23 390 23.5 393 23 396" fill="none" stroke="#cfcfcf" stroke-width="1.5"/><circle cx="23" cy="397.5" r="1.3" fill="#cfcfcf"/><path d="M29.5 398 L29.5 401.5 L26 401.5Z" fill="#9a9a9a"/><path d="M10 409 H22.5 C23.5 409 24 410 24 411 V418 C24 420.5 22 421.5 19 421.5 L17 421 L11 424.5 C9.5 425.5 8.8 424.5 9.5 423.5 L13.5 418.5 C11 418 10 416.5 10 414.5Z" fill="#d0d0d0"/><path d="M11.5 423 L15 418 M16 417.5 L18.5 414.5" stroke="#444" stroke-width="0.8"/><path d="M29.5 424 L29.5 427.5 L26 427.5Z" fill="#9a9a9a"/><ellipse cx="16" cy="442.5" rx="8" ry="7.2" fill="#c4c4c4"/><ellipse cx="16" cy="442.5" rx="6" ry="5" fill="none" stroke="#8a8a8a" stroke-width="1.4" stroke-dasharray="1.2 1.3"/><ellipse cx="16" cy="442.5" rx="3" ry="2.5" fill="none" stroke="#8a8a8a" stroke-width="1.2" stroke-dasharray="1 1.2"/><path d="M29.5 450 L29.5 453.5 L26 453.5Z" fill="#9a9a9a"/><path d="M8.5 479.5 L13.5 469 L18.5 467.5 L21.5 470.5 L20 475.5 Z" fill="#d6d6d6"/><path d="M18.5 466 L21.5 463.5 L25 467 L22.5 470Z" fill="#d6d6d6"/><circle cx="15" cy="473" r="1" fill="#333"/><path d="M9 479 L15 473" stroke="#444" stroke-width="0.6"/><path d="M29.5 478 L29.5 481.5 L26 481.5Z" fill="#9a9a9a"/><path d="M9.5 490 H23 V494 H22 L21.2 491.5 H17.4 V502.6 L19.6 503 V504 H13 V503 L15.2 502.6 V491.5 H11.3 L10.5 494 H9.5Z" fill="#d6d6d6"/><path d="M29.5 504 L29.5 507.5 L26 507.5Z" fill="#9a9a9a"/><path d="M11 516 L11 529 L14 526.5 L16.5 531 L18.5 530 L16.2 525.5 L20.5 525.5Z" fill="#222" stroke="#d8d8d8" stroke-width="1"/><path d="M29.5 530 L29.5 533.5 L26 533.5Z" fill="#9a9a9a"/><path d="M14 543.5 C16 542.5 18 545 20 544 C23 543 25.5 545.5 23.5 548 C22 550 23.5 552 24 554 C25 557 21.5 558.5 19.5 556.5 C18 555 15 557 12.5 559.5 C9.5 562 7 559.5 9 557 C10.5 555 11 553 9 551 C7 548.5 9 546 11.5 546.5 C12.5 546.5 13 544.5 14 543.5Z" fill="#8c8c8c" stroke="#dcdcdc" stroke-width="1.2"/><path d="M29.5 558 L29.5 561.5 L26 561.5Z" fill="#9a9a9a"/><path d="M11.5 580 H22 L20 587 H13Z" fill="#d4d4d4"/><path d="M11.6 581 V573.8 M14.6 581 V572.5 M17.6 581 V573 M20.8 581.5 L21.8 575.5 M12.5 584 L8.8 579.8" stroke="#d4d4d4" stroke-width="2.5" stroke-linecap="round"/><path d="M29.5 586 L29.5 589.5 L26 589.5Z" fill="#9a9a9a"/><path d="M18.2 605.5 L23 610.8" stroke="#cfcfcf" stroke-width="2.8" stroke-linecap="round"/><circle cx="14.5" cy="602" r="4.6" fill="#8a8a8a" stroke="#d8d8d8" stroke-width="1.3"/><rect x="5" y="623" width="7" height="7" fill="#d8d8d8"/><rect x="1.5" y="619.5" width="7" height="7" fill="#222" stroke="#d8d8d8" stroke-width="1"/><path d="M21 621.5 H25.5 C27 621.5 27.5 622.5 27.5 624 V628" fill="none" stroke="#e0e0e0" stroke-width="1.2"/><path d="M19.5 621.5 L22 619 V624Z M27.5 630 L25 627.5 H30Z" fill="#e0e0e0"/><rect x="12.5" y="647.5" width="18" height="18" fill="#1e4a66" stroke="#f0f0f0" stroke-width="1"/><rect x="11.5" y="646.5" width="20" height="20" fill="none" stroke="#2a2a2a" stroke-width="1"/><rect x="2.5" y="637.5" width="18" height="18" fill="#c94f5f" stroke="#f0f0f0" stroke-width="1"/><rect x="1.5" y="636.5" width="20" height="20" fill="none" stroke="#2a2a2a" stroke-width="1"/><rect x="7.5" y="674.5" width="16" height="13" fill="#2a2a2a" stroke="#d8d8d8" stroke-width="1"/><circle cx="15.5" cy="681" r="3.8" fill="none" stroke="#e8e8e8" stroke-width="1" stroke-dasharray="1 1"/><rect x="12" y="700" width="10" height="8" fill="#a0a0a0" stroke="#dcdcdc" stroke-width="1"/><rect x="7.5" y="704.5" width="10" height="9" fill="#6a6a6a" stroke="#dcdcdc" stroke-width="1"/><path d="M29.5 713 L29.5 716.5 L26 716.5Z" fill="#9a9a9a"/></svg>
<svg style="position:absolute;left:1037px;top:64px;" width="9" height="7" viewBox="0 0 9 7"><path d="M3.5 0.5 L0 3.2 L3.5 6Z M7.5 0.5 L4 3.2 L7.5 6Z" fill="#a8a8a8"/></svg>
<svg style="position:absolute;left:1351px;top:64px;" width="9" height="7" viewBox="0 0 9 7"><path d="M0 0.5 L3.5 3.2 L0 6Z M4 0.5 L7.5 3.2 L4 6Z" fill="#a8a8a8"/></svg>
<div style="left:1012px;top:113px;width:37px;height:1px;background:#2e2e2e;box-shadow:0 1px 0 #5e5e5e"></div>
<div style="left:1012px;top:183px;width:37px;height:1px;background:#2e2e2e;box-shadow:0 1px 0 #5e5e5e"></div>
<div style="left:1012px;top:224px;width:37px;height:1px;background:#2e2e2e;box-shadow:0 1px 0 #5e5e5e"></div>
<div style="left:1012px;top:292px;width:37px;height:1px;background:#2e2e2e;box-shadow:0 1px 0 #5e5e5e"></div>
<svg style="position:absolute;left:1021px;top:77px;" width="20" height="5" viewBox="0 0 20 5"><rect x="0" y="0" width="1" height="5" fill="#2c2c2c"/><rect x="2" y="0" width="1" height="5" fill="#2c2c2c"/><rect x="4" y="0" width="1" height="5" fill="#2c2c2c"/><rect x="6" y="0" width="1" height="5" fill="#2c2c2c"/><rect x="8" y="0" width="1" height="5" fill="#2c2c2c"/><rect x="10" y="0" width="1" height="5" fill="#2c2c2c"/><rect x="12" y="0" width="1" height="5" fill="#2c2c2c"/><rect x="14" y="0" width="1" height="5" fill="#2c2c2c"/><rect x="16" y="0" width="1" height="5" fill="#2c2c2c"/><rect x="18" y="0" width="1" height="5" fill="#2c2c2c"/></svg>
<svg style="position:absolute;left:1021px;top:118px;" width="20" height="5" viewBox="0 0 20 5"><rect x="0" y="0" width="1" height="5" fill="#2c2c2c"/><rect x="2" y="0" width="1" height="5" fill="#2c2c2c"/><rect x="4" y="0" width="1" height="5" fill="#2c2c2c"/><rect x="6" y="0" width="1" height="5" fill="#2c2c2c"/><rect x="8" y="0" width="1" height="5" fill="#2c2c2c"/><rect x="10" y="0" width="1" height="5" fill="#2c2c2c"/><rect x="12" y="0" width="1" height="5" fill="#2c2c2c"/><rect x="14" y="0" width="1" height="5" fill="#2c2c2c"/><rect x="16" y="0" width="1" height="5" fill="#2c2c2c"/><rect x="18" y="0" width="1" height="5" fill="#2c2c2c"/></svg>
<svg style="position:absolute;left:1021px;top:187px;" width="20" height="5" viewBox="0 0 20 5"><rect x="0" y="0" width="1" height="5" fill="#2c2c2c"/><rect x="2" y="0" width="1" height="5" fill="#2c2c2c"/><rect x="4" y="0" width="1" height="5" fill="#2c2c2c"/><rect x="6" y="0" width="1" height="5" fill="#2c2c2c"/><rect x="8" y="0" width="1" height="5" fill="#2c2c2c"/><rect x="10" y="0" width="1" height="5" fill="#2c2c2c"/><rect x="12" y="0" width="1" height="5" fill="#2c2c2c"/><rect x="14" y="0" width="1" height="5" fill="#2c2c2c"/><rect x="16" y="0" width="1" height="5" fill="#2c2c2c"/><rect x="18" y="0" width="1" height="5" fill="#2c2c2c"/></svg>
<svg style="position:absolute;left:1021px;top:228px;" width="20" height="5" viewBox="0 0 20 5"><rect x="0" y="0" width="1" height="5" fill="#2c2c2c"/><rect x="2" y="0" width="1" height="5" fill="#2c2c2c"/><rect x="4" y="0" width="1" height="5" fill="#2c2c2c"/><rect x="6" y="0" width="1" height="5" fill="#2c2c2c"/><rect x="8" y="0" width="1" height="5" fill="#2c2c2c"/><rect x="10" y="0" width="1" height="5" fill="#2c2c2c"/><rect x="12" y="0" width="1" height="5" fill="#2c2c2c"/><rect x="14" y="0" width="1" height="5" fill="#2c2c2c"/><rect x="16" y="0" width="1" height="5" fill="#2c2c2c"/><rect x="18" y="0" width="1" height="5" fill="#2c2c2c"/></svg>
<svg style="position:absolute;left:0px;top:0px;" width="1363" height="727" viewBox="0 0 1363 727"><rect x="1025.5" y="89.5" width="4.5" height="4.5" fill="#3a3a3a" stroke="#e0e0e0"/><rect x="1025.5" y="95.5" width="4.5" height="4.5" fill="#3a3a3a" stroke="#e0e0e0"/><rect x="1025" y="101" width="5.5" height="5" fill="#d0d0d0"/><rect x="1025" y="88" width="5" height="1" fill="#222"/><path d="M1033 90 H1039 L1033 95.5Z" fill="#dcdcdc"/><path d="M1035.5 92.5 C1039.5 95 1039.5 101 1034 104.5" fill="none" stroke="#d8d8d8" stroke-width="2"/><rect x="1033" y="89" width="6" height="1" fill="#222"/><rect x="1027" y="138" width="9" height="10" fill="#d4d4d4"/><path d="M1029.5 138 L1026 133 C1023.5 130 1024 127.5 1026 128 C1028 128.5 1029.5 131 1029.5 134Z" fill="#d8d8d8"/><path d="M1031.3 138 V132 C1029.8 130 1030 126.5 1031.5 126.5 C1033 126.5 1033.2 130 1032.3 132 V138Z" fill="#d8d8d8"/><path d="M1033.5 138 L1035.5 132 C1036.5 129.5 1039.5 129 1040.5 130.5 C1041 132 1038.5 133.5 1036.5 134Z" fill="#d8d8d8"/><path d="M1031 162 H1041" stroke="#d6d6d6" stroke-width="2"/><path d="M1022 161 C1025 158 1029 158 1031 161.5 C1029 164 1024 164 1022 161Z" fill="#d6d6d6"/><path d="M1022 170 H1033" stroke="#d6d6d6" stroke-width="2"/><path d="M1032 170 L1040 164 C1042 167 1042 173 1040 176Z" fill="#d6d6d6"/><path d="M1022 199 H1024 M1022 202 H1024 M1022 205 H1024 M1022 208 H1024" stroke="#e0e0e0" stroke-width="1.3"/><path d="M1025.5 199 H1029 M1025.5 202 H1029 M1025.5 205 H1029" stroke="#e0e0e0" stroke-width="1"/><circle cx="1033" cy="201.5" r="2.3" fill="#d0d0d0"/><path d="M1032 203 H1034 V207 H1039 V211 H1026 V207 H1032Z" fill="#d0d0d0"/><rect x="1026" y="213" width="13" height="1.2" fill="#d0d0d0"/><text x="1023.5" y="256" font-family="Liberation Sans" font-size="17" fill="#d8d8d8">A</text><rect x="1037" y="239" width="1" height="18" fill="#d8d8d8"/><path d="M1031 269 H1036.5 M1035.3 269 V284 M1032.2 269 V284" stroke="#d8d8d8" stroke-width="1.3"/><path d="M1031.5 269 C1026 269 1025 276 1031.5 276Z" fill="#d8d8d8"/></svg>
<div style="left:1052px;top:74px;width:78px;height:1px;background:#5e5e5e"></div>
<svg style="position:absolute;left:1344px;top:78px;" width="14" height="9" viewBox="0 0 14 9"><path d="M0 3 L5 3 L2.5 6Z" fill="#d0d0d0"/><rect x="6" y="0" width="8" height="1.2" fill="#e0e0e0"/><rect x="6" y="2.3" width="8" height="1.2" fill="#e0e0e0"/><rect x="6" y="4.6" width="8" height="1.2" fill="#e0e0e0"/><rect x="6" y="6.9" width="8" height="1.2" fill="#e0e0e0"/></svg>
<svg style="position:absolute;left:1344px;top:405px;" width="14" height="9" viewBox="0 0 14 9"><path d="M0 3 L5 3 L2.5 6Z" fill="#d0d0d0"/><rect x="6" y="0" width="8" height="1.2" fill="#e0e0e0"/><rect x="6" y="2.3" width="8" height="1.2" fill="#e0e0e0"/><rect x="6" y="4.6" width="8" height="1.2" fill="#e0e0e0"/><rect x="6" y="6.9" width="8" height="1.2" fill="#e0e0e0"/></svg>
<div style="left:1051px;top:124px;width:311px;height:1px;background:#2f2f2f"></div>
<div style="left:1051px;top:125px;width:311px;height:1px;background:#6a6a6a"></div>
<div style="left:1347px;top:126px;width:15px;height:253px;background:linear-gradient(90deg,#383838,#464646)"></div>
<svg style="position:absolute;left:1351px;top:387px;" width="10" height="10" viewBox="0 0 10 10"><rect x="8" y="0" width="1" height="1" fill="#222"/><rect x="8" y="2" width="1" height="1" fill="#222"/><rect x="6" y="2" width="1" height="1" fill="#222"/><rect x="8" y="4" width="1" height="1" fill="#222"/><rect x="6" y="4" width="1" height="1" fill="#222"/><rect x="4" y="4" width="1" height="1" fill="#222"/><rect x="8" y="6" width="1" height="1" fill="#222"/><rect x="6" y="6" width="1" height="1" fill="#222"/><rect x="4" y="6" width="1" height="1" fill="#222"/><rect x="2" y="6" width="1" height="1" fill="#222"/><rect x="8" y="8" width="1" height="1" fill="#222"/><rect x="6" y="8" width="1" height="1" fill="#222"/><rect x="4" y="8" width="1" height="1" fill="#222"/><rect x="2" y="8" width="1" height="1" fill="#222"/><rect x="0" y="8" width="1" height="1" fill="#222"/></svg>
<div style="left:1051px;top:398px;width:312px;height:3px;background:#2b2b2b"></div>
<div style="left:1051px;top:401px;width:30px;height:17px;background:#424242;border-right:1px solid #333"></div>
<div style="left:1082px;top:401px;width:47px;height:17px;background:#535353"></div>
<div style="left:1130px;top:401px;width:45px;height:17px;background:#424242;border-right:1px solid #333"></div>
<div class="t" style="left:1059px;top:405.54px;font-size:10px;line-height:10px;color:#9a9a9a;font-weight:bold;">3D</div>
<div class="t" style="left:1089px;top:405.54px;font-size:10px;line-height:10px;color:#f0f0f0;font-weight:bold;">Ebenen</div>
<div class="t" style="left:1136px;top:405.54px;font-size:10px;line-height:10px;color:#9a9a9a;font-weight:bold;">Kanäle</div>
<div style="left:1056px;top:424px;width:86px;height:17px;background:linear-gradient(#6e6e6e,#5b5b5b);border:1px solid #2c2c2c;border-radius:3px"></div>
<svg style="position:absolute;left:1063px;top:426px;" width="12" height="12" viewBox="0 0 12 12"><circle cx="7" cy="4.6" r="3.6" fill="none" stroke="#e0e0e0" stroke-width="1.3"/><path d="M4.5 7.2 L1 10.8" stroke="#e0e0e0" stroke-width="1.8"/></svg>
<div class="t" style="left:1078px;top:427.54px;font-size:10px;line-height:10px;color:#f0f0f0;font-weight:normal;">Art</div>
<svg style="position:absolute;left:1131px;top:427px;" width="7" height="11" viewBox="0 0 7 11"><path d="M0.2 4 L3.5 0.5 L6.8 4Z M0.2 6.5 L3.5 10 L6.8 6.5Z" fill="#e4e4e4"/></svg>
<svg style="position:absolute;left:0px;top:0px;" width="1363" height="727" viewBox="0 0 1363 727"><rect x="1171.5" y="426.5" width="12" height="10" fill="#3a3a3a" stroke="#d6d6d6"/><path d="M1173 435 L1176 431 L1178 433 L1180 431.5 L1182 435Z" fill="#d6d6d6"/><circle cx="1180.5" cy="429.5" r="1" fill="#d6d6d6"/><circle cx="1201" cy="431.5" r="5" fill="#d0d0d0"/><path d="M1197.5 435 L1204.5 428 A5 5 0 0 1 1197.5 435Z" fill="#5a5a5a"/><text x="1225" y="438" text-anchor="middle" font-family="Liberation Serif" font-weight="bold" font-size="14" fill="#d8d8d8">T</text><rect x="1245.5" y="427.5" width="9" height="9" fill="none" stroke="#d6d6d6"/><rect x="1244" y="426" width="3" height="3" fill="#d6d6d6"/><rect x="1253" y="426" width="3" height="3" fill="#d6d6d6"/><rect x="1244" y="435" width="3" height="3" fill="#d6d6d6"/><rect x="1253" y="435" width="3" height="3" fill="#d6d6d6"/><path d="M1272 426 H1277 L1280 429 V437 H1274 V431 H1272Z" fill="none" stroke="#d0d0d0"/><rect x="1268" y="431" width="6" height="6" fill="#c8c8c8"/><rect x="1310" y="424" width="9" height="16" rx="1" fill="#3a3a3a" stroke="#2b2b2b"/><rect x="1311" y="425" width="7" height="7" fill="#8a8a8a"/></svg>
<div style="left:1051px;top:446px;width:311px;height:1px;background:#3a3a3a;box-shadow:0 1px 0 #5c5c5c"></div>
<div style="left:1056px;top:451px;width:148px;height:18px;background:linear-gradient(#6e6e6e,#5b5b5b);border:1px solid #2c2c2c;border-radius:3px"></div>
<div class="t" style="left:1064px;top:455.54px;font-size:10px;line-height:10px;color:#f0f0f0;font-weight:normal;">Normal</div>
<svg style="position:absolute;left:1193px;top:454px;" width="7" height="11" viewBox="0 0 7 11"><path d="M0.2 4 L3.5 0.5 L6.8 4Z M0.2 6.5 L3.5 10 L6.8 6.5Z" fill="#e4e4e4"/></svg>
<div class="t" style="left:1212px;top:454.54px;font-size:10px;line-height:10px;color:#f0f0f0;font-weight:normal;">Deckkraft:</div>
<div style="left:1262px;top:451px;width:57px;height:18px;background:#393939;border:1px solid #2c2c2c;border-radius:2px"></div>
<div style="left:1299px;top:452px;width:19px;height:16px;background:linear-gradient(#6a6a6a,#5a5a5a)"></div>
<div class="t" style="left:1267px;top:455.54px;font-size:10px;line-height:10px;color:#f0f0f0;font-weight:normal;">100%</div>
<svg style="position:absolute;left:1304px;top:458px;" width="8" height="5" viewBox="0 0 8 5"><path d="M0.5 0.5 H7.5 L4 4.5Z" fill="#e6e6e6"/></svg>
<div style="left:1262px;top:479px;width:57px;height:18px;background:#393939;border:1px solid #2c2c2c;border-radius:2px"></div>
<div style="left:1299px;top:480px;width:19px;height:16px;background:linear-gradient(#6a6a6a,#5a5a5a)"></div>
<div class="t" style="left:1267px;top:483.54px;font-size:10px;line-height:10px;color:#f0f0f0;font-weight:normal;">100%</div>
<svg style="position:absolute;left:1304px;top:486px;" width="8" height="5" viewBox="0 0 8 5"><path d="M0.5 0.5 H7.5 L4 4.5Z" fill="#e6e6e6"/></svg>
<div style="left:1051px;top:474px;width:311px;height:1px;background:#3a3a3a;box-shadow:0 1px 0 #5c5c5c"></div>
<div class="t" style="left:1058px;top:482.54px;font-size:10px;line-height:10px;color:#f0f0f0;font-weight:normal;letter-spacing:-0.2px">Fixieren:</div>
<div class="t" style="left:1226px;top:482.54px;font-size:10px;line-height:10px;color:#f0f0f0;font-weight:normal;letter-spacing:-0.2px">Fläche:</div>
<svg style="position:absolute;left:0px;top:0px;" width="1363" height="727" viewBox="0 0 1363 727"><rect x="1106" y="482" width="11" height="12" fill="#d0d0d0"/><rect x="1106.0" y="486" width="3.7" height="4" fill="#8a8a8a"/><rect x="1109.7" y="482" width="3.7" height="4" fill="#8a8a8a"/><rect x="1109.7" y="490" width="3.7" height="4" fill="#8a8a8a"/><rect x="1113.4" y="486" width="3.7" height="4" fill="#8a8a8a"/><path d="M1133 489 L1141 481.5" stroke="#d0d0d0" stroke-width="2" stroke-linecap="round"/><path d="M1125.5 494 C1129 494 1132 493 1133.5 491 C1134.5 489.5 1133.5 488 1132.5 488 C1129.5 488 1129 492 1125.5 494Z" fill="#d8d8d8"/><path d="M1155.5 482 V495 M1149 488.5 H1162" stroke="#d8d8d8" stroke-width="1.2"/><path d="M1155.5 481.5 L1153 484.5 H1158Z M1155.5 495.5 L1153 492.5 H1158Z M1148.5 488.5 L1151.5 486 V491Z M1162.5 488.5 L1159.5 486 V491Z" fill="#d8d8d8"/><path d="M1175 487 V484.5 C1175 481.5 1181 481.5 1181 484.5 V487" fill="none" stroke="#d0d0d0" stroke-width="1.5"/><rect x="1173" y="487" width="10" height="7.5" fill="#d0d0d0"/><rect x="1177.5" y="489.5" width="1" height="2.5" fill="#444"/></svg>
<div style="left:1051px;top:502px;width:297px;height:1px;background:#333"></div>
<div style="left:1086px;top:503px;width:32px;height:4px;background:#111"></div>
<div style="left:1087px;top:503px;width:30px;height:3px;background:repeating-linear-gradient(90deg,#fff 0 4px,#d8d8d8 4px 8px)"></div>
<div style="left:1051px;top:503px;width:32px;height:7px;border-right:1px solid #3a3a3a"></div>
<div style="left:1051px;top:510px;width:297px;height:1px;background:#3a3a3a"></div>
<div style="left:1082px;top:511px;width:1px;height:38px;background:#3a3a3a"></div>
<div style="left:1061px;top:524px;width:12px;height:12px;border:1px solid #3a3a3a;box-shadow:inset 1px 1px 0 #4a4a4a, 1px 1px 0 #5e5e5e"></div>
<div style="left:1086px;top:514px;width:32px;height:32px;background:#111"></div>
<svg style="position:absolute;left:1087px;top:515px;overflow:hidden" width="30" height="30" viewBox="0 0 30 30"><rect width="30" height="30" fill="#fff"/><rect x="0" y="4" width="4" height="4" fill="#cdcdcd"/><rect x="0" y="12" width="4" height="4" fill="#cdcdcd"/><rect x="0" y="20" width="4" height="4" fill="#cdcdcd"/><rect x="0" y="28" width="4" height="4" fill="#cdcdcd"/><rect x="4" y="0" width="4" height="4" fill="#cdcdcd"/><rect x="4" y="8" width="4" height="4" fill="#cdcdcd"/><rect x="4" y="16" width="4" height="4" fill="#cdcdcd"/><rect x="4" y="24" width="4" height="4" fill="#cdcdcd"/><rect x="8" y="4" width="4" height="4" fill="#cdcdcd"/><rect x="8" y="12" width="4" height="4" fill="#cdcdcd"/><rect x="8" y="20" width="4" height="4" fill="#cdcdcd"/><rect x="8" y="28" width="4" height="4" fill="#cdcdcd"/><rect x="12" y="0" width="4" height="4" fill="#cdcdcd"/><rect x="12" y="8" width="4" height="4" fill="#cdcdcd"/><rect x="12" y="16" width="4" height="4" fill="#cdcdcd"/><rect x="12" y="24" width="4" height="4" fill="#cdcdcd"/><rect x="16" y="4" width="4" height="4" fill="#cdcdcd"/><rect x="16" y="12" width="4" height="4" fill="#cdcdcd"/><rect x="16" y="20" width="4" height="4" fill="#cdcdcd"/><rect x="16" y="28" width="4" height="4" fill="#cdcdcd"/><rect x="20" y="0" width="4" height="4" fill="#cdcdcd"/><rect x="20" y="8" width="4" height="4" fill="#cdcdcd"/><rect x="20" y="16" width="4" height="4" fill="#cdcdcd"/><rect x="20" y="24" width="4" height="4" fill="#cdcdcd"/><rect x="24" y="4" width="4" height="4" fill="#cdcdcd"/><rect x="24" y="12" width="4" height="4" fill="#cdcdcd"/><rect x="24" y="20" width="4" height="4" fill="#cdcdcd"/><rect x="24" y="28" width="4" height="4" fill="#cdcdcd"/><rect x="28" y="0" width="4" height="4" fill="#cdcdcd"/><rect x="28" y="8" width="4" height="4" fill="#cdcdcd"/><rect x="28" y="16" width="4" height="4" fill="#cdcdcd"/><rect x="28" y="24" width="4" height="4" fill="#cdcdcd"/><g transform="translate(0.2,0)"><path d="M13.5 3.5 L14.5 6.5 L16.5 5 L16 8 L19 8 L17 10.5 L19.5 12.5 L15.5 13 L14 15 L11 13.5 L8.5 13 L10 10.5 L8.5 8 L11.5 8 L11.5 5.5 L12.8 6.5Z" fill="#fff6d8"/></g></svg>
<div class="t" style="left:1128px;top:526.53px;font-size:10px;line-height:10px;color:#f2f2f2;font-weight:normal;">Ebene 3</div>
<div style="left:1051px;top:549px;width:297px;height:1px;background:#3a3a3a"></div>
<div style="left:1082px;top:550px;width:1px;height:38px;background:#3a3a3a"></div>
<div style="left:1061px;top:563px;width:12px;height:12px;border:1px solid #3a3a3a;box-shadow:inset 1px 1px 0 #4a4a4a, 1px 1px 0 #5e5e5e"></div>
<div style="left:1086px;top:553px;width:32px;height:32px;background:#111"></div>
<svg style="position:absolute;left:1087px;top:554px;overflow:hidden" width="30" height="30" viewBox="0 0 30 30"><rect width="30" height="30" fill="#fff"/><rect x="0" y="4" width="4" height="4" fill="#cdcdcd"/><rect x="0" y="12" width="4" height="4" fill="#cdcdcd"/><rect x="0" y="20" width="4" height="4" fill="#cdcdcd"/><rect x="0" y="28" width="4" height="4" fill="#cdcdcd"/><rect x="4" y="0" width="4" height="4" fill="#cdcdcd"/><rect x="4" y="8" width="4" height="4" fill="#cdcdcd"/><rect x="4" y="16" width="4" height="4" fill="#cdcdcd"/><rect x="4" y="24" width="4" height="4" fill="#cdcdcd"/><rect x="8" y="4" width="4" height="4" fill="#cdcdcd"/><rect x="8" y="12" width="4" height="4" fill="#cdcdcd"/><rect x="8" y="20" width="4" height="4" fill="#cdcdcd"/><rect x="8" y="28" width="4" height="4" fill="#cdcdcd"/><rect x="12" y="0" width="4" height="4" fill="#cdcdcd"/><rect x="12" y="8" width="4" height="4" fill="#cdcdcd"/><rect x="12" y="16" width="4" height="4" fill="#cdcdcd"/><rect x="12" y="24" width="4" height="4" fill="#cdcdcd"/><rect x="16" y="4" width="4" height="4" fill="#cdcdcd"/><rect x="16" y="12" width="4" height="4" fill="#cdcdcd"/><rect x="16" y="20" width="4" height="4" fill="#cdcdcd"/><rect x="16" y="28" width="4" height="4" fill="#cdcdcd"/><rect x="20" y="0" width="4" height="4" fill="#cdcdcd"/><rect x="20" y="8" width="4" height="4" fill="#cdcdcd"/><rect x="20" y="16" width="4" height="4" fill="#cdcdcd"/><rect x="20" y="24" width="4" height="4" fill="#cdcdcd"/><rect x="24" y="4" width="4" height="4" fill="#cdcdcd"/><rect x="24" y="12" width="4" height="4" fill="#cdcdcd"/><rect x="24" y="20" width="4" height="4" fill="#cdcdcd"/><rect x="24" y="28" width="4" height="4" fill="#cdcdcd"/><rect x="28" y="0" width="4" height="4" fill="#cdcdcd"/><rect x="28" y="8" width="4" height="4" fill="#cdcdcd"/><rect x="28" y="16" width="4" height="4" fill="#cdcdcd"/><rect x="28" y="24" width="4" height="4" fill="#cdcdcd"/><g transform="translate(0.2,0)"><path d="M6.3,2.1 3.6,3.2 2.6,4.4 2.0,5.9 2.1,24.5 3.2,26.5 5.3,27.8 13.2,28.0 9.4,24.0 8.6,22.5 10.6,23.2 8.6,21.7 9.0,21.3 8.7,21.4 8.8,20.9 8.3,20.7 8.2,18.3 9.4,19.0 10.2,19.4 10.5,19.5 10.5,19.5 10.8,19.7 8.4,17.6 9.0,17.4 9.2,17.4 9.2,17.4 9.5,17.3 8.8,17.2 9.1,16.7 8.4,16.8 9.3,14.2 11.8,15.4 9.7,13.5 11.5,11.8 10.2,9.4 12.8,9.7 11.2,6.3 13.6,7.2 13.7,3.7 16.1,6.1 18.1,5.1 17.9,5.5 17.8,5.9 18.5,5.5 18.2,6.2 18.9,5.9 18.6,6.6 19.3,6.3 19.0,7.0 19.7,6.7 19.4,7.4 20.1,7.1 19.8,7.8 20.6,7.5 20.2,8.2 21.0,7.9 20.6,8.6 21.4,8.3 21.0,9.0 21.8,8.7 21.4,9.4 22.2,9.1 21.8,9.8 22.6,9.5 22.2,10.2 23.0,9.9 22.6,10.6 23.4,10.3 23.0,11.0 23.8,10.7 23.4,11.4 24.2,11.1 23.8,11.8 24.6,11.5 24.2,12.2 25.0,11.9 24.6,12.7 25.4,12.3 25.0,13.1 25.8,12.7 25.4,13.5 26.2,13.1 25.8,13.9 26.6,13.5 26.2,14.3 27.0,13.9 26.6,14.7 27.4,14.3 27.1,15.1 27.7,14.8 27.5,5.5 26.2,3.4 23.6,2.1 6.3,2.1ZM16.1,6.1 16.1,6.1 16.1,6.1 16.1,6.1ZM27.7,14.9 27.6,15.1 27.5,15.5 27.7,15.3 27.7,14.9ZM12.1,15.8 12.2,15.9 12.2,15.8 12.1,15.8ZM12.6,16.2 12.4,16.2 12.6,16.3 12.6,16.2Z" fill="#ffcb00"/><path d="M10.2,13.9 12.2,15.8 8.9,16.7 8.8,17.2 9.3,17.1 9.3,17.4 13.1,16.2 17.8,17.9 13.0,19.8 8.8,18.0 10.0,19.2 11.9,20.2 8.6,20.9 9.1,21.6 12.9,20.6 18.4,22.3 14.3,23.9 9.0,22.1 10.3,23.3 13.1,24.3 10.2,25.0 13.2,28.0 23.6,27.9 25.4,27.3 26.8,26.0 27.7,23.6 27.7,14.8 27.1,15.1 27.4,14.3 26.6,14.7 27.0,13.9 26.2,14.3 26.6,13.5 25.8,13.9 26.2,13.1 25.4,13.5 25.8,12.7 25.0,13.1 25.4,12.3 24.6,12.7 25.0,11.9 24.2,12.2 24.6,11.5 23.8,11.8 24.2,11.1 23.4,11.4 23.8,10.7 23.0,11.0 23.4,10.3 22.6,10.6 23.0,9.9 22.2,10.2 22.6,9.5 21.8,9.8 22.2,9.1 21.4,9.4 21.8,8.7 21.0,9.0 21.4,8.3 20.6,8.6 21.0,7.9 20.2,8.2 20.6,7.5 19.8,7.8 20.1,7.1 19.4,7.4 19.7,6.7 19.0,7.0 19.3,6.3 18.6,6.6 18.9,5.9 18.2,6.2 18.5,5.5 17.8,5.9 17.0,9.5 20.3,9.7 18.1,11.8 19.0,12.5 13.2,15.4 10.2,13.9ZM12.5,16.2 12.6,16.3 12.4,16.2 12.5,16.2ZM14.7,26.4 11.0,25.6 14.3,24.7 18.2,25.7 14.7,26.4ZM19.5,13.1 21.2,16.1 18.8,17.4 14.1,15.8 19.5,13.1ZM21.3,16.8 21.4,18.0 19.9,17.7 21.3,16.8ZM21.4,18.7 21.2,20.9 19.5,21.8 14.0,20.3 18.9,18.2 21.4,18.7ZM20.9,21.9 21.0,21.9 20.7,22.0 20.9,21.9ZM20.7,22.8 19.2,25.2 15.5,24.3 19.6,22.6 20.7,22.8ZM16.1,6.1 16.1,6.1 16.1,6.1 16.1,6.1ZM16.1,6.1 14.5,4.5 14.1,4.1 14.1,4.1 15.0,5.1 16.1,6.1Z" fill="#f5a000"/><path d="M11.5,11.8 9.7,13.5 13.2,15.4 19.0,12.5 18.1,11.8 20.3,9.7 17.0,9.5 18.1,5.1 16.1,6.1 13.7,3.7 13.6,7.2 11.2,6.3 12.8,9.7 10.2,9.4 11.5,11.8ZM9.3,14.2 8.4,16.8 12.2,15.7 9.3,14.2ZM8.4,17.6 13.0,19.8 17.8,17.9 13.1,16.2 8.4,17.6ZM8.2,18.3 8.3,21.0 11.9,20.2 8.2,18.3ZM8.6,21.7 14.3,23.9 18.4,22.3 12.9,20.6 8.6,21.7ZM8.6,22.5 10.1,25.0 13.1,24.3 8.6,22.5ZM11.0,25.6 15.0,26.4 18.2,25.7 14.3,24.7 11.0,25.6ZM21.2,16.1 19.5,13.1 14.1,15.8 18.8,17.4 21.2,16.1ZM21.3,16.8 20.6,17.3 19.9,17.7 21.4,18.0 21.3,16.8ZM21.2,20.9 21.4,18.7 18.9,18.2 14.0,20.3 19.5,21.8 21.2,20.9ZM20.7,22.0 20.9,22.0 21.0,21.9 20.7,22.0ZM19.2,25.2 20.7,22.8 19.6,22.6 15.5,24.3 19.2,25.2Z" fill="#fffbea"/></g></svg>
<div class="t" style="left:1128px;top:565.53px;font-size:10px;line-height:10px;color:#f2f2f2;font-weight:normal;">Ebene 2</div>
<div style="left:1051px;top:588px;width:297px;height:1px;background:#3a3a3a"></div>
<div style="left:1083px;top:589px;width:264px;height:38px;background:#6a7b93"></div>
<div style="left:1082px;top:589px;width:1px;height:38px;background:#3a3a3a"></div>
<svg style="position:absolute;left:1059px;top:601px;" width="16" height="13" viewBox="0 0 16 13"><path d="M2 7.5 C3.5 2.5 12.5 2.5 14 7.5" fill="none" stroke="#2a2a2a" stroke-width="1"/><ellipse cx="8" cy="7.5" rx="6.2" ry="4.4" fill="#d6d6d6"/><circle cx="8" cy="8" r="2.9" fill="#2a2a2a"/><circle cx="9.2" cy="6.8" r="1" fill="#e0e0e0"/></svg>
<div style="left:1086px;top:592px;width:32px;height:32px;background:#111"></div>
<svg style="position:absolute;left:1087px;top:593px;overflow:hidden" width="30" height="30" viewBox="0 0 30 30"><rect width="30" height="30" fill="#fff"/><rect x="0" y="4" width="4" height="4" fill="#cdcdcd"/><rect x="0" y="12" width="4" height="4" fill="#cdcdcd"/><rect x="0" y="20" width="4" height="4" fill="#cdcdcd"/><rect x="0" y="28" width="4" height="4" fill="#cdcdcd"/><rect x="4" y="0" width="4" height="4" fill="#cdcdcd"/><rect x="4" y="8" width="4" height="4" fill="#cdcdcd"/><rect x="4" y="16" width="4" height="4" fill="#cdcdcd"/><rect x="4" y="24" width="4" height="4" fill="#cdcdcd"/><rect x="8" y="4" width="4" height="4" fill="#cdcdcd"/><rect x="8" y="12" width="4" height="4" fill="#cdcdcd"/><rect x="8" y="20" width="4" height="4" fill="#cdcdcd"/><rect x="8" y="28" width="4" height="4" fill="#cdcdcd"/><rect x="12" y="0" width="4" height="4" fill="#cdcdcd"/><rect x="12" y="8" width="4" height="4" fill="#cdcdcd"/><rect x="12" y="16" width="4" height="4" fill="#cdcdcd"/><rect x="12" y="24" width="4" height="4" fill="#cdcdcd"/><rect x="16" y="4" width="4" height="4" fill="#cdcdcd"/><rect x="16" y="12" width="4" height="4" fill="#cdcdcd"/><rect x="16" y="20" width="4" height="4" fill="#cdcdcd"/><rect x="16" y="28" width="4" height="4" fill="#cdcdcd"/><rect x="20" y="0" width="4" height="4" fill="#cdcdcd"/><rect x="20" y="8" width="4" height="4" fill="#cdcdcd"/><rect x="20" y="16" width="4" height="4" fill="#cdcdcd"/><rect x="20" y="24" width="4" height="4" fill="#cdcdcd"/><rect x="24" y="4" width="4" height="4" fill="#cdcdcd"/><rect x="24" y="12" width="4" height="4" fill="#cdcdcd"/><rect x="24" y="20" width="4" height="4" fill="#cdcdcd"/><rect x="24" y="28" width="4" height="4" fill="#cdcdcd"/><rect x="28" y="0" width="4" height="4" fill="#cdcdcd"/><rect x="28" y="8" width="4" height="4" fill="#cdcdcd"/><rect x="28" y="16" width="4" height="4" fill="#cdcdcd"/><rect x="28" y="24" width="4" height="4" fill="#cdcdcd"/><g transform="translate(0.2,0)"><path d="M10.2,13.9 12.2,15.8 8.9,16.7 8.8,17.2 9.3,17.1 9.3,17.4 13.1,16.2 17.8,17.9 13.0,19.8 8.8,18.0 10.0,19.2 11.9,20.2 8.6,20.9 9.1,21.6 12.9,20.6 18.4,22.3 14.3,23.9 9.0,22.1 10.3,23.3 13.1,24.3 10.2,25.0 13.2,28.0 23.6,27.9 25.4,27.3 26.8,26.0 27.7,23.6 27.7,14.8 27.1,15.1 27.4,14.3 26.6,14.7 27.0,13.9 26.2,14.3 26.6,13.5 25.8,13.9 26.2,13.1 25.4,13.5 25.8,12.7 25.0,13.1 25.4,12.3 24.6,12.7 25.0,11.9 24.2,12.2 24.6,11.5 23.8,11.8 24.2,11.1 23.4,11.4 23.8,10.7 23.0,11.0 23.4,10.3 22.6,10.6 23.0,9.9 22.2,10.2 22.6,9.5 21.8,9.8 22.2,9.1 21.4,9.4 21.8,8.7 21.0,9.0 21.4,8.3 20.6,8.6 21.0,7.9 20.2,8.2 20.6,7.5 19.8,7.8 20.1,7.1 19.4,7.4 19.7,6.7 19.0,7.0 19.3,6.3 18.6,6.6 18.9,5.9 18.2,6.2 18.5,5.5 17.8,5.9 17.0,9.5 20.3,9.7 18.1,11.8 19.0,12.5 13.2,15.4 10.2,13.9ZM12.5,16.2 12.6,16.3 12.4,16.2 12.5,16.2ZM14.7,26.4 11.0,25.6 14.3,24.7 18.2,25.7 14.7,26.4ZM19.5,13.1 21.2,16.1 18.8,17.4 14.1,15.8 19.5,13.1ZM21.3,16.8 21.4,18.0 19.9,17.7 21.3,16.8ZM21.4,18.7 21.2,20.9 19.5,21.8 14.0,20.3 18.9,18.2 21.4,18.7ZM20.9,21.9 21.0,21.9 20.7,22.0 20.9,21.9ZM20.7,22.8 19.2,25.2 15.5,24.3 19.6,22.6 20.7,22.8ZM16.1,6.1 16.1,6.1 16.1,6.1 16.1,6.1ZM16.1,6.1 14.5,4.5 14.1,4.1 14.1,4.1 15.0,5.1 16.1,6.1Z" fill="#f5a000"/></g></svg>
<svg style="position:absolute;left:1083px;top:590px;" width="38" height="37" viewBox="0 0 38 37"><path d="M1 8 V1 H8 M30 1 H37 V8 M37 29 V36 H30 M8 36 H1 V29" fill="none" stroke="#e8eef5" stroke-width="1.2"/></svg>
<div class="t" style="left:1128px;top:604.53px;font-size:10px;line-height:10px;color:#f2f2f2;font-weight:normal;">Ebene 16</div>
<div style="left:1051px;top:627px;width:297px;height:1px;background:#3a3a3a"></div>
<div style="left:1082px;top:628px;width:1px;height:38px;background:#3a3a3a"></div>
<svg style="position:absolute;left:1059px;top:640px;" width="16" height="13" viewBox="0 0 16 13"><path d="M2 7.5 C3.5 2.5 12.5 2.5 14 7.5" fill="none" stroke="#2a2a2a" stroke-width="1"/><ellipse cx="8" cy="7.5" rx="6.2" ry="4.4" fill="#d6d6d6"/><circle cx="8" cy="8" r="2.9" fill="#2a2a2a"/><circle cx="9.2" cy="6.8" r="1" fill="#e0e0e0"/></svg>
<div style="left:1086px;top:631px;width:32px;height:32px;background:#111"></div>
<svg style="position:absolute;left:1087px;top:632px;overflow:hidden" width="30" height="30" viewBox="0 0 30 30"><rect width="30" height="30" fill="#fff"/><rect x="0" y="4" width="4" height="4" fill="#cdcdcd"/><rect x="0" y="12" width="4" height="4" fill="#cdcdcd"/><rect x="0" y="20" width="4" height="4" fill="#cdcdcd"/><rect x="0" y="28" width="4" height="4" fill="#cdcdcd"/><rect x="4" y="0" width="4" height="4" fill="#cdcdcd"/><rect x="4" y="8" width="4" height="4" fill="#cdcdcd"/><rect x="4" y="16" width="4" height="4" fill="#cdcdcd"/><rect x="4" y="24" width="4" height="4" fill="#cdcdcd"/><rect x="8" y="4" width="4" height="4" fill="#cdcdcd"/><rect x="8" y="12" width="4" height="4" fill="#cdcdcd"/><rect x="8" y="20" width="4" height="4" fill="#cdcdcd"/><rect x="8" y="28" width="4" height="4" fill="#cdcdcd"/><rect x="12" y="0" width="4" height="4" fill="#cdcdcd"/><rect x="12" y="8" width="4" height="4" fill="#cdcdcd"/><rect x="12" y="16" width="4" height="4" fill="#cdcdcd"/><rect x="12" y="24" width="4" height="4" fill="#cdcdcd"/><rect x="16" y="4" width="4" height="4" fill="#cdcdcd"/><rect x="16" y="12" width="4" height="4" fill="#cdcdcd"/><rect x="16" y="20" width="4" height="4" fill="#cdcdcd"/><rect x="16" y="28" width="4" height="4" fill="#cdcdcd"/><rect x="20" y="0" width="4" height="4" fill="#cdcdcd"/><rect x="20" y="8" width="4" height="4" fill="#cdcdcd"/><rect x="20" y="16" width="4" height="4" fill="#cdcdcd"/><rect x="20" y="24" width="4" height="4" fill="#cdcdcd"/><rect x="24" y="4" width="4" height="4" fill="#cdcdcd"/><rect x="24" y="12" width="4" height="4" fill="#cdcdcd"/><rect x="24" y="20" width="4" height="4" fill="#cdcdcd"/><rect x="24" y="28" width="4" height="4" fill="#cdcdcd"/><rect x="28" y="0" width="4" height="4" fill="#cdcdcd"/><rect x="28" y="8" width="4" height="4" fill="#cdcdcd"/><rect x="28" y="16" width="4" height="4" fill="#cdcdcd"/><rect x="28" y="24" width="4" height="4" fill="#cdcdcd"/><g transform="translate(0.2,0)"><path d="M6.3,2.1 3.6,3.2 2.6,4.4 2.0,5.9 2.1,24.5 3.2,26.5 5.3,27.8 13.2,28.0 9.4,24.0 8.6,22.5 10.6,23.2 8.6,21.7 9.0,21.3 8.7,21.4 8.8,20.9 8.3,20.7 8.2,18.3 9.4,19.0 10.2,19.4 10.5,19.5 10.5,19.5 10.8,19.7 8.4,17.6 9.0,17.4 9.2,17.4 9.2,17.4 9.5,17.3 8.8,17.2 9.1,16.7 8.4,16.8 9.3,14.2 11.8,15.4 9.7,13.5 11.5,11.8 10.2,9.4 12.8,9.7 11.2,6.3 13.6,7.2 13.7,3.7 16.1,6.1 18.1,5.1 17.9,5.5 17.8,5.9 18.5,5.5 18.2,6.2 18.9,5.9 18.6,6.6 19.3,6.3 19.0,7.0 19.7,6.7 19.4,7.4 20.1,7.1 19.8,7.8 20.6,7.5 20.2,8.2 21.0,7.9 20.6,8.6 21.4,8.3 21.0,9.0 21.8,8.7 21.4,9.4 22.2,9.1 21.8,9.8 22.6,9.5 22.2,10.2 23.0,9.9 22.6,10.6 23.4,10.3 23.0,11.0 23.8,10.7 23.4,11.4 24.2,11.1 23.8,11.8 24.6,11.5 24.2,12.2 25.0,11.9 24.6,12.7 25.4,12.3 25.0,13.1 25.8,12.7 25.4,13.5 26.2,13.1 25.8,13.9 26.6,13.5 26.2,14.3 27.0,13.9 26.6,14.7 27.4,14.3 27.1,15.1 27.7,14.8 27.5,5.5 26.2,3.4 23.6,2.1 6.3,2.1ZM16.1,6.1 16.1,6.1 16.1,6.1 16.1,6.1ZM27.7,14.9 27.6,15.1 27.5,15.5 27.7,15.3 27.7,14.9ZM12.1,15.8 12.2,15.9 12.2,15.8 12.1,15.8ZM12.6,16.2 12.4,16.2 12.6,16.3 12.6,16.2Z" fill="#ffcb00"/></g></svg>
<div class="t" style="left:1128px;top:643.53px;font-size:10px;line-height:10px;color:#f2f2f2;font-weight:normal;">Ebene 15</div>
<div style="left:1051px;top:666px;width:297px;height:1px;background:#3a3a3a"></div>
<div style="left:1082px;top:667px;width:1px;height:38px;background:#3a3a3a"></div>
<div style="left:1061px;top:680px;width:12px;height:12px;border:1px solid #3a3a3a;box-shadow:inset 1px 1px 0 #4a4a4a, 1px 1px 0 #5e5e5e"></div>
<div style="left:1086px;top:670px;width:32px;height:32px;background:#111"></div>
<svg style="position:absolute;left:1087px;top:671px;overflow:hidden" width="30" height="30" viewBox="0 0 30 30"><rect width="30" height="30" fill="#fff"/><rect x="0" y="4" width="4" height="4" fill="#cdcdcd"/><rect x="0" y="12" width="4" height="4" fill="#cdcdcd"/><rect x="0" y="20" width="4" height="4" fill="#cdcdcd"/><rect x="0" y="28" width="4" height="4" fill="#cdcdcd"/><rect x="4" y="0" width="4" height="4" fill="#cdcdcd"/><rect x="4" y="8" width="4" height="4" fill="#cdcdcd"/><rect x="4" y="16" width="4" height="4" fill="#cdcdcd"/><rect x="4" y="24" width="4" height="4" fill="#cdcdcd"/><rect x="8" y="4" width="4" height="4" fill="#cdcdcd"/><rect x="8" y="12" width="4" height="4" fill="#cdcdcd"/><rect x="8" y="20" width="4" height="4" fill="#cdcdcd"/><rect x="8" y="28" width="4" height="4" fill="#cdcdcd"/><rect x="12" y="0" width="4" height="4" fill="#cdcdcd"/><rect x="12" y="8" width="4" height="4" fill="#cdcdcd"/><rect x="12" y="16" width="4" height="4" fill="#cdcdcd"/><rect x="12" y="24" width="4" height="4" fill="#cdcdcd"/><rect x="16" y="4" width="4" height="4" fill="#cdcdcd"/><rect x="16" y="12" width="4" height="4" fill="#cdcdcd"/><rect x="16" y="20" width="4" height="4" fill="#cdcdcd"/><rect x="16" y="28" width="4" height="4" fill="#cdcdcd"/><rect x="20" y="0" width="4" height="4" fill="#cdcdcd"/><rect x="20" y="8" width="4" height="4" fill="#cdcdcd"/><rect x="20" y="16" width="4" height="4" fill="#cdcdcd"/><rect x="20" y="24" width="4" height="4" fill="#cdcdcd"/><rect x="24" y="4" width="4" height="4" fill="#cdcdcd"/><rect x="24" y="12" width="4" height="4" fill="#cdcdcd"/><rect x="24" y="20" width="4" height="4" fill="#cdcdcd"/><rect x="24" y="28" width="4" height="4" fill="#cdcdcd"/><rect x="28" y="0" width="4" height="4" fill="#cdcdcd"/><rect x="28" y="8" width="4" height="4" fill="#cdcdcd"/><rect x="28" y="16" width="4" height="4" fill="#cdcdcd"/><rect x="28" y="24" width="4" height="4" fill="#cdcdcd"/><g transform="translate(0.2,0)"><path d="M6.3,2.1 3.6,3.2 2.6,4.4 2.0,5.9 2.1,24.5 3.2,26.5 5.3,27.8 13.2,28.0 9.4,24.0 8.6,22.5 10.6,23.2 8.6,21.7 9.0,21.3 8.7,21.4 8.8,20.9 8.3,20.7 8.2,18.3 9.4,19.0 10.2,19.4 10.5,19.5 10.5,19.5 10.8,19.7 8.4,17.6 9.0,17.4 9.2,17.4 9.2,17.4 9.5,17.3 8.8,17.2 9.1,16.7 8.4,16.8 9.3,14.2 11.8,15.4 9.7,13.5 11.5,11.8 10.2,9.4 12.8,9.7 11.2,6.3 13.6,7.2 13.7,3.7 16.1,6.1 18.1,5.1 17.9,5.5 17.8,5.9 18.5,5.5 18.2,6.2 18.9,5.9 18.6,6.6 19.3,6.3 19.0,7.0 19.7,6.7 19.4,7.4 20.1,7.1 19.8,7.8 20.6,7.5 20.2,8.2 21.0,7.9 20.6,8.6 21.4,8.3 21.0,9.0 21.8,8.7 21.4,9.4 22.2,9.1 21.8,9.8 22.6,9.5 22.2,10.2 23.0,9.9 22.6,10.6 23.4,10.3 23.0,11.0 23.8,10.7 23.4,11.4 24.2,11.1 23.8,11.8 24.6,11.5 24.2,12.2 25.0,11.9 24.6,12.7 25.4,12.3 25.0,13.1 25.8,12.7 25.4,13.5 26.2,13.1 25.8,13.9 26.6,13.5 26.2,14.3 27.0,13.9 26.6,14.7 27.4,14.3 27.1,15.1 27.7,14.8 27.5,5.5 26.2,3.4 23.6,2.1 6.3,2.1ZM16.1,6.1 16.1,6.1 16.1,6.1 16.1,6.1ZM27.7,14.9 27.6,15.1 27.5,15.5 27.7,15.3 27.7,14.9ZM12.1,15.8 12.2,15.9 12.2,15.8 12.1,15.8ZM12.6,16.2 12.4,16.2 12.6,16.3 12.6,16.2Z" fill="#ffcb00"/><path d="M10.2,13.9 12.2,15.8 8.9,16.7 8.8,17.2 9.3,17.1 9.3,17.4 13.1,16.2 17.8,17.9 13.0,19.8 8.8,18.0 10.0,19.2 11.9,20.2 8.6,20.9 9.1,21.6 12.9,20.6 18.4,22.3 14.3,23.9 9.0,22.1 10.3,23.3 13.1,24.3 10.2,25.0 13.2,28.0 23.6,27.9 25.4,27.3 26.8,26.0 27.7,23.6 27.7,14.8 27.1,15.1 27.4,14.3 26.6,14.7 27.0,13.9 26.2,14.3 26.6,13.5 25.8,13.9 26.2,13.1 25.4,13.5 25.8,12.7 25.0,13.1 25.4,12.3 24.6,12.7 25.0,11.9 24.2,12.2 24.6,11.5 23.8,11.8 24.2,11.1 23.4,11.4 23.8,10.7 23.0,11.0 23.4,10.3 22.6,10.6 23.0,9.9 22.2,10.2 22.6,9.5 21.8,9.8 22.2,9.1 21.4,9.4 21.8,8.7 21.0,9.0 21.4,8.3 20.6,8.6 21.0,7.9 20.2,8.2 20.6,7.5 19.8,7.8 20.1,7.1 19.4,7.4 19.7,6.7 19.0,7.0 19.3,6.3 18.6,6.6 18.9,5.9 18.2,6.2 18.5,5.5 17.8,5.9 17.0,9.5 20.3,9.7 18.1,11.8 19.0,12.5 13.2,15.4 10.2,13.9ZM12.5,16.2 12.6,16.3 12.4,16.2 12.5,16.2ZM14.7,26.4 11.0,25.6 14.3,24.7 18.2,25.7 14.7,26.4ZM19.5,13.1 21.2,16.1 18.8,17.4 14.1,15.8 19.5,13.1ZM21.3,16.8 21.4,18.0 19.9,17.7 21.3,16.8ZM21.4,18.7 21.2,20.9 19.5,21.8 14.0,20.3 18.9,18.2 21.4,18.7ZM20.9,21.9 21.0,21.9 20.7,22.0 20.9,21.9ZM20.7,22.8 19.2,25.2 15.5,24.3 19.6,22.6 20.7,22.8ZM16.1,6.1 16.1,6.1 16.1,6.1 16.1,6.1ZM16.1,6.1 14.5,4.5 14.1,4.1 14.1,4.1 15.0,5.1 16.1,6.1Z" fill="#f5a000"/><path d="M11.5,11.8 9.7,13.5 13.2,15.4 19.0,12.5 18.1,11.8 20.3,9.7 17.0,9.5 18.1,5.1 16.1,6.1 13.7,3.7 13.6,7.2 11.2,6.3 12.8,9.7 10.2,9.4 11.5,11.8ZM9.3,14.2 8.4,16.8 12.2,15.7 9.3,14.2ZM8.4,17.6 13.0,19.8 17.8,17.9 13.1,16.2 8.4,17.6ZM8.2,18.3 8.3,21.0 11.9,20.2 8.2,18.3ZM8.6,21.7 14.3,23.9 18.4,22.3 12.9,20.6 8.6,21.7ZM8.6,22.5 10.1,25.0 13.1,24.3 8.6,22.5ZM11.0,25.6 15.0,26.4 18.2,25.7 14.3,24.7 11.0,25.6ZM21.2,16.1 19.5,13.1 14.1,15.8 18.8,17.4 21.2,16.1ZM21.3,16.8 20.6,17.3 19.9,17.7 21.4,18.0 21.3,16.8ZM21.2,20.9 21.4,18.7 18.9,18.2 14.0,20.3 19.5,21.8 21.2,20.9ZM20.7,22.0 20.9,22.0 21.0,21.9 20.7,22.0ZM19.2,25.2 20.7,22.8 19.6,22.6 15.5,24.3 19.2,25.2Z" fill="#fffbea"/></g></svg>
<div class="t" style="left:1128px;top:682.53px;font-size:10px;line-height:10px;color:#f2f2f2;font-weight:normal;">Ebene 1</div>
<div style="left:1051px;top:705px;width:297px;height:1px;background:#3a3a3a"></div>
<div style="left:1347px;top:503px;width:15px;height:203px;background:#3f3f3f"></div>
<svg style="position:absolute;left:1350px;top:508px;" width="9" height="6" viewBox="0 0 9 6"><path d="M0.5 5 L4.5 1 L8.5 5Z" fill="#e8e8e8"/></svg>
<svg style="position:absolute;left:1350px;top:697px;" width="9" height="6" viewBox="0 0 9 6"><path d="M0.5 1 L4.5 5 L8.5 1Z" fill="#e8e8e8"/></svg>
<div style="left:1349px;top:637px;width:12px;height:51px;background:linear-gradient(90deg,#7a7a7a,#5e5e5e);border-radius:4px;border:1px solid #333"></div>
<div style="left:1051px;top:706px;width:312px;height:2px;background:#2f2f2f"></div>
<div style="left:1051px;top:708px;width:312px;height:19px;background:#535353"></div>
<svg style="position:absolute;left:0px;top:0px;" width="1363" height="727" viewBox="0 0 1363 727"><path d="M1164 714.5 H1161 C1158 714.5 1158 721 1161 721 H1164 M1168 714.5 H1171 C1174 714.5 1174 721 1171 721 H1168 M1162 717.8 H1170" fill="none" stroke="#9e9e9e" stroke-width="1.8"/><text x="1187" y="723" font-family="Liberation Serif" font-style="italic" font-size="15" fill="#d6d6d6">fx</text><path d="M1202 722 H1206 L1204 724.5Z" fill="#d6d6d6"/><rect x="1214" y="712.5" width="13" height="10" fill="#cfcfcf"/><circle cx="1220.5" cy="717.5" r="2.8" fill="#3a3a3a"/><circle cx="1246.5" cy="717" r="5" fill="#d0d0d0"/><path d="M1243 720.5 L1250 713.5 A5 5 0 0 1 1243 720.5Z" fill="#5a5a5a"/><path d="M1255 722 H1259 L1257 724.5Z" fill="#d6d6d6"/><path d="M1268 712.5 H1273 L1274.5 714 H1280 V722.5 H1268Z" fill="#cfcfcf"/><path d="M1296 711.5 H1306.5 V722.5 H1299 V717 H1296Z" fill="#cfcfcf"/><path d="M1296 718 L1298 722.5 L1296 722.5Z" fill="#cfcfcf"/><rect x="1322" y="713" width="11" height="1.5" fill="#cfcfcf"/><rect x="1325.5" y="711" width="4" height="2" fill="none" stroke="#cfcfcf" stroke-width="1"/><path d="M1323.5 715.5 H1331.5 V723 H1323.5Z" fill="#cfcfcf"/><path d="M1325.5 716.5 V722 M1327.5 716.5 V722 M1329.5 716.5 V722" stroke="#555" stroke-width="0.8"/></svg>
<div style="left:305px;top:171px;width:438px;height:446px;background:#1c1c1c"></div>
<svg style="position:absolute;left:306px;top:172px;" width="436" height="444" viewBox="0 0 436 444"><defs><pattern id="chk" width="16" height="16" patternUnits="userSpaceOnUse">
<rect width="16" height="16" fill="#fff"/><rect x="8" width="8" height="8" fill="#ccc"/><rect y="8" width="8" height="8" fill="#ccc"/></pattern></defs>
<rect width="436" height="444" fill="url(#chk)"/>
<path fill="#ffcb00" fill-rule="evenodd" d="M98.0,31.0 93.2,31.2 88.5,31.7 83.8,32.5 79.1,33.6 74.6,35.0 70.1,36.8 65.8,38.8 61.6,41.2 57.6,43.8 53.8,46.7 50.2,49.8 46.8,53.2 43.7,56.8 40.8,60.6 38.2,64.6 35.8,68.8 33.8,73.1 32.0,77.6 30.6,82.1 29.5,86.8 28.7,91.5 28.2,96.2 28.0,101.0 28.0,344.0 28.2,348.8 28.7,353.5 29.5,358.2 30.6,362.9 32.0,367.4 33.8,371.9 35.8,376.2 38.2,380.4 40.8,384.4 43.7,388.2 46.8,391.8 50.2,395.2 53.8,398.3 57.6,401.2 61.6,403.8 65.8,406.2 70.1,408.2 74.6,410.0 79.1,411.4 83.8,412.5 88.5,413.3 93.2,413.8 98.0,414.0 340.0,414.0 344.8,413.8 349.5,413.3 354.2,412.5 358.9,411.4 363.4,410.0 367.9,408.2 372.2,406.2 376.4,403.8 380.4,401.2 384.2,398.3 387.8,395.2 391.2,391.8 394.3,388.2 397.2,384.4 399.8,380.4 402.2,376.2 404.2,371.9 406.0,367.4 407.4,362.9 408.5,358.2 409.3,353.5 409.8,348.8 410.0,344.0 410.0,101.0 409.8,96.2 409.3,91.5 408.5,86.8 407.4,82.1 406.0,77.6 404.2,73.1 402.2,68.8 399.8,64.6 397.2,60.6 394.3,56.8 391.2,53.2 387.8,49.8 384.2,46.7 380.4,43.8 376.4,41.2 372.2,38.8 367.9,36.8 363.4,35.0 358.9,33.6 354.2,32.5 349.5,31.7 344.8,31.2 340.0,31.0 98.0,31.0ZM169.7,174.8 168.1,170.2 166.5,165.9 164.9,161.8 163.3,158.0 161.6,154.5 160.0,151.2 158.3,148.2 156.7,145.4 155.0,142.9 153.3,140.7 151.6,138.7 155.3,139.0 159.0,139.3 162.6,139.7 166.2,140.1 169.7,140.6 173.2,141.1 176.7,141.6 180.1,142.2 183.4,142.8 186.7,143.5 190.0,144.2 187.5,138.9 185.0,133.7 182.7,128.7 180.3,123.8 178.1,119.0 175.9,114.4 173.8,109.9 171.8,105.5 169.8,101.2 167.9,97.1 166.0,93.1 169.7,94.6 173.3,96.1 176.8,97.6 180.2,98.9 183.6,100.3 186.8,101.5 190.0,102.7 193.0,103.9 196.0,105.0 198.9,106.1 201.7,107.1 201.9,105.8 202.1,104.0 202.3,101.8 202.6,99.5 202.9,97.0 203.2,94.5 203.4,92.1 203.6,90.0 203.8,88.1 203.9,86.4 204.1,84.7 204.2,83.0 204.3,81.3 204.3,79.5 204.3,77.6 204.3,75.5 204.2,73.0 204.0,70.2 203.7,67.1 203.4,63.9 203.1,60.9 202.8,58.2 202.6,55.9 202.4,54.2 205.9,57.9 209.3,61.5 212.7,65.0 216.1,68.5 219.4,71.9 222.6,75.1 225.8,78.3 228.9,81.4 232.0,84.4 235.0,87.4 238.0,90.2 240.7,88.8 243.4,87.4 246.1,86.0 248.9,84.6 251.6,83.3 254.4,81.9 257.2,80.6 260.0,79.3 262.8,78.0 265.6,76.7 268.5,75.4 265.7,81.7 263.1,87.8 260.7,94.0 258.6,100.0 256.8,106.0 255.2,112.0 253.9,117.8 252.9,123.6 252.1,129.3 251.5,135.0 251.2,140.6 254.9,139.6 258.8,138.8 262.9,138.3 267.0,138.0 271.3,138.0 275.7,138.2 280.3,138.7 285.0,139.4 289.8,140.4 294.8,141.6 299.9,143.1 297.3,144.8 294.7,146.8 292.0,148.9 289.2,151.4 286.4,154.1 283.6,157.0 280.7,160.2 277.7,163.6 274.7,167.2 271.6,171.1 268.5,175.3 270.6,177.0 272.6,178.7 274.7,180.4 276.7,182.0 278.7,183.7 280.6,185.4 280.7,185.5 278.6,186.8 275.0,188.8 271.5,190.8 268.0,192.8 264.4,194.8 260.9,196.7 257.4,198.6 253.9,200.4 250.3,202.3 246.8,204.1 243.3,205.8 239.7,207.6 236.2,209.3 232.7,211.0 229.2,212.7 225.6,214.3 222.1,215.9 218.6,217.5 215.1,219.0 211.5,220.5 208.0,222.0 204.5,223.5 201.0,224.9 197.5,226.3 194.7,227.4 191.4,225.8 187.6,224.0 183.8,222.1 180.0,220.2 176.2,218.3 172.5,216.3 168.7,214.3 164.9,212.3 161.1,210.2 157.3,208.1 153.5,206.0 149.7,203.8 146.0,201.6 144.0,200.4 144.6,199.4 146.0,197.5 147.5,195.6 149.0,193.7 150.6,191.9 152.3,190.2 154.1,188.4 156.0,186.5 158.1,184.6 160.3,182.6 162.6,180.6 165.0,178.7 167.4,176.7 169.7,174.8ZM133.9,218.5 135.4,215.5 136.9,212.7 138.3,210.0 138.4,209.9 140.3,211.0 140.4,211.0 144.2,213.3 144.2,213.3 148.1,215.5 148.1,215.5 151.9,217.7 151.9,217.7 155.8,219.8 155.8,219.9 159.6,222.0 159.7,222.0 163.5,224.0 163.5,224.1 167.3,226.1 167.4,226.1 171.2,228.1 171.2,228.1 175.1,230.0 175.1,230.1 178.9,232.0 178.9,232.0 180.3,232.7 179.8,232.8 176.3,234.1 172.8,235.3 169.3,236.4 165.8,237.6 162.2,238.7 158.7,239.7 155.2,240.8 151.7,241.8 148.2,242.8 144.6,243.8 141.1,244.7 137.6,245.6 134.1,246.5 130.6,247.3 127.0,248.2 124.5,248.7 124.5,248.5 125.2,244.9 126.0,241.4 126.8,237.9 127.7,234.5 128.7,231.2 129.8,228.0 131.0,224.8 132.4,221.6 133.9,218.5ZM132.8,264.9 128.9,262.7 124.9,260.4 124.3,260.0 125.9,259.7 125.9,259.7 129.5,258.9 129.5,258.9 133.1,258.0 133.1,258.0 136.7,257.2 136.7,257.2 140.3,256.3 140.3,256.3 143.9,255.4 143.9,255.3 147.5,254.4 147.5,254.4 151.1,253.4 151.1,253.4 154.7,252.4 154.7,252.4 158.3,251.4 158.3,251.3 161.9,250.3 161.9,250.3 165.5,249.2 165.5,249.2 169.1,248.0 169.1,248.0 172.7,246.9 172.7,246.9 176.3,245.7 176.3,245.7 179.9,244.5 179.9,244.5 183.5,243.2 183.5,243.2 187.1,241.9 187.1,241.9 190.7,240.6 190.7,240.6 194.3,239.3 194.4,239.3 194.4,239.4 198.2,241.1 198.3,241.1 202.1,242.8 202.1,242.8 205.9,244.5 206.0,244.5 209.8,246.1 209.8,246.1 213.7,247.7 213.7,247.8 217.5,249.3 217.6,249.3 221.4,250.8 221.4,250.9 225.3,252.3 225.3,252.3 229.1,253.8 229.2,253.8 233.0,255.2 233.0,255.2 236.8,256.6 236.9,256.6 240.7,257.9 240.8,258.0 244.6,259.3 244.6,259.3 248.4,260.5 248.5,260.6 252.3,261.8 252.4,261.8 256.2,263.0 256.2,263.0 260.0,264.1 260.1,264.2 263.1,265.0 259.2,266.9 255.2,268.8 251.1,270.6 247.1,272.5 243.0,274.2 239.0,276.0 234.9,277.7 230.9,279.4 226.8,281.0 222.8,282.6 218.7,284.2 214.7,285.7 210.6,287.2 206.6,288.7 202.5,290.1 198.5,291.5 194.4,292.8 192.0,293.6 188.3,292.0 184.3,290.3 180.4,288.6 176.4,286.8 172.4,285.0 168.5,283.2 164.5,281.3 160.6,279.4 156.6,277.4 152.6,275.4 148.7,273.4 144.7,271.3 140.8,269.2 136.8,267.1 132.8,264.9ZM121.4,277.6 121.6,274.8 121.8,271.7 121.8,271.3 123.5,272.2 123.5,272.3 127.5,274.5 127.5,274.5 131.5,276.7 131.6,276.7 135.5,278.9 135.6,278.9 139.6,281.0 139.6,281.1 143.6,283.1 143.6,283.2 147.6,285.2 147.7,285.2 151.7,287.2 151.7,287.3 155.7,289.2 155.7,289.3 159.7,291.2 159.8,291.2 163.8,293.1 163.8,293.1 167.8,295.0 167.9,295.0 171.8,296.8 171.9,296.9 175.6,298.5 174.2,298.9 170.2,300.1 166.1,301.1 162.1,302.2 158.0,303.2 154.0,304.2 150.0,305.1 145.9,306.0 141.9,306.9 137.8,307.7 133.8,308.5 129.7,309.2 125.7,309.9 122.6,310.4 122.5,310.0 122.1,306.5 121.8,302.9 121.6,299.2 121.4,295.5 121.3,291.9 121.2,288.6 121.2,285.6 121.2,282.9 121.2,280.3 121.4,277.6ZM137.7,325.4 134.3,323.8 130.9,322.2 127.7,320.7 131.7,320.0 131.7,320.0 135.8,319.3 135.9,319.3 139.9,318.5 140.0,318.5 144.1,317.6 144.1,317.6 148.2,316.8 148.3,316.7 152.4,315.8 152.4,315.8 156.5,314.9 156.5,314.9 160.6,313.9 160.7,313.9 164.8,312.9 164.8,312.8 168.9,311.8 168.9,311.8 173.0,310.7 173.1,310.7 177.2,309.5 177.2,309.5 181.3,308.4 181.4,308.4 185.4,307.1 185.5,307.1 189.6,305.9 189.6,305.9 191.5,305.3 192.0,305.5 192.1,305.5 196.1,307.1 196.1,307.1 200.1,308.7 200.1,308.7 204.1,310.2 204.2,310.3 208.2,311.8 208.2,311.8 212.2,313.2 212.3,313.2 216.3,314.7 216.3,314.7 220.3,316.0 220.3,316.1 224.3,317.4 224.4,317.4 228.4,318.7 228.4,318.7 232.4,320.0 232.5,320.0 236.5,321.2 236.5,321.3 240.5,322.4 240.6,322.5 244.5,323.6 244.6,323.6 248.6,324.7 248.6,324.8 252.6,325.8 252.7,325.8 256.7,326.9 256.7,326.9 260.7,327.9 260.8,327.9 264.8,328.9 264.8,328.9 268.8,329.8 268.9,329.8 272.0,330.6 269.1,331.9 265.6,333.5 262.1,335.0 258.6,336.5 255.2,338.0 251.7,339.5 248.2,340.9 244.7,342.3 241.3,343.6 237.8,345.0 234.3,346.3 230.9,347.6 227.4,348.8 223.9,350.1 220.4,351.3 217.0,352.4 213.5,353.6 211.5,354.2 209.4,353.5 205.9,352.4 202.5,351.3 199.1,350.1 195.7,348.9 192.3,347.7 188.9,346.5 185.5,345.3 182.1,344.0 178.7,342.7 175.2,341.4 171.8,340.0 168.4,338.7 165.0,337.3 161.6,335.9 158.2,334.5 154.8,333.0 151.4,331.5 148.0,330.1 144.5,328.5 141.1,327.0 137.7,325.4ZM131.4,342.1 130.3,339.6 129.3,337.1 128.3,334.5 127.7,332.9 129.6,333.8 129.6,333.8 133.1,335.4 133.1,335.4 136.6,337.0 136.6,337.0 140.0,338.6 140.1,338.6 143.5,340.1 143.5,340.1 147.0,341.6 147.0,341.6 150.4,343.1 150.5,343.1 153.9,344.6 153.9,344.6 157.4,346.1 157.4,346.1 160.8,347.5 160.9,347.5 164.3,348.9 164.3,348.9 167.8,350.3 167.8,350.3 171.2,351.6 171.3,351.6 174.7,353.0 174.7,353.0 178.2,354.3 178.2,354.3 181.7,355.6 181.7,355.6 185.1,356.9 185.2,356.9 188.6,358.1 188.6,358.1 192.1,359.3 192.1,359.3 193.1,359.7 192.7,359.8 189.2,360.8 185.7,361.7 182.3,362.6 178.8,363.4 175.3,364.3 171.9,365.1 168.4,365.9 164.9,366.6 161.5,367.3 158.0,368.0 154.5,368.7 151.1,369.3 150.2,369.5 150.0,369.3 148.0,367.4 146.1,365.5 144.5,363.5 142.9,361.5 141.5,359.5 140.0,357.5 138.6,355.4 137.3,353.3 136.0,351.2 134.8,349.1 133.6,346.8 132.5,344.5 131.4,342.1ZM169.2,382.0 166.0,380.5 163.0,378.8 162.2,378.4 163.7,378.1 163.7,378.1 167.2,377.4 167.2,377.4 170.8,376.6 170.8,376.6 174.3,375.8 174.3,375.8 177.9,375.0 177.9,375.0 181.4,374.1 181.4,374.1 185.0,373.3 185.0,373.2 188.5,372.3 188.5,372.3 192.1,371.4 192.1,371.4 195.6,370.4 195.6,370.4 199.1,369.4 199.2,369.4 202.7,368.4 202.7,368.4 206.2,367.4 206.3,367.4 209.8,366.3 209.8,366.3 211.5,365.8 212.9,366.2 212.9,366.2 216.4,367.3 216.4,367.3 219.8,368.3 219.9,368.3 223.3,369.3 223.3,369.3 226.8,370.3 226.8,370.3 230.3,371.3 230.3,371.3 233.7,372.3 233.8,372.3 237.2,373.2 237.2,373.2 240.7,374.1 240.7,374.1 244.2,375.0 244.2,375.0 247.6,375.8 247.7,375.9 251.1,376.7 251.1,376.7 254.6,377.5 254.6,377.5 258.0,378.3 258.1,378.3 261.5,379.1 261.6,379.1 265.0,379.8 265.0,379.8 268.5,380.5 268.5,380.5 269.5,380.7 268.3,381.3 265.2,382.6 262.0,383.8 258.6,385.0 254.9,386.1 251.1,387.2 247.1,388.1 243.1,389.0 239.0,389.7 234.8,390.3 230.5,390.8 226.1,391.1 221.6,391.4 217.2,391.4 212.8,391.4 208.4,391.2 204.0,390.9 199.6,390.4 195.3,389.8 191.1,389.1 187.1,388.2 183.3,387.2 179.5,386.1 175.9,384.9 172.5,383.5 169.2,382.0ZM309.6,228.1 310.9,231.4 312.1,234.6 313.1,237.6 313.2,238.0 312.0,238.7 307.9,241.1 303.8,243.5 299.8,245.8 295.7,248.1 291.7,250.3 287.6,252.5 283.6,254.7 279.5,256.8 277.8,257.7 274.5,256.8 270.8,255.8 267.0,254.7 263.2,253.6 259.4,252.5 255.7,251.3 251.9,250.1 248.1,248.8 244.3,247.6 240.5,246.2 236.8,244.9 233.0,243.5 229.2,242.1 225.4,240.6 221.6,239.1 217.9,237.6 214.1,236.0 210.3,234.4 208.6,233.7 208.6,233.6 208.7,233.6 212.2,232.2 212.3,232.1 215.8,230.6 215.9,230.6 219.4,229.1 219.5,229.1 223.0,227.5 223.1,227.5 226.6,225.9 226.7,225.9 230.2,224.3 230.2,224.3 233.8,222.6 233.8,222.6 237.4,220.9 237.4,220.9 241.0,219.2 241.0,219.2 244.6,217.5 244.6,217.5 248.2,215.7 248.2,215.7 251.8,213.9 251.8,213.9 255.4,212.0 255.4,212.0 258.9,210.2 259.0,210.2 262.5,208.3 262.6,208.3 266.1,206.4 266.2,206.3 269.7,204.4 269.7,204.4 273.3,202.4 273.3,202.4 276.9,200.4 276.9,200.4 280.5,198.4 280.5,198.4 284.1,196.3 284.1,196.3 287.7,194.2 287.7,194.2 288.7,193.6 289.1,194.0 291.0,196.5 293.2,199.5 295.6,202.9 298.0,206.7 300.5,210.5 302.8,214.3 304.8,217.9 306.6,221.3 308.2,224.8 309.6,228.1ZM316.0,253.0 316.3,256.1 316.6,259.3 316.8,262.6 316.9,265.9 316.0,265.8 312.3,265.2 308.5,264.5 304.7,263.8 300.9,263.0 297.2,262.3 294.0,261.6 296.9,260.0 297.0,259.9 301.1,257.7 301.1,257.7 305.2,255.4 305.2,255.4 309.3,253.0 309.3,253.0 313.4,250.6 313.5,250.6 315.6,249.4 315.7,250.2 316.0,253.0ZM315.5,297.2 315.2,300.3 314.8,303.3 314.4,306.3 314.0,309.1 310.8,310.9 307.3,312.8 303.8,314.7 300.4,316.6 296.9,318.4 293.4,320.2 289.9,321.9 288.4,322.7 287.1,322.4 283.1,321.6 279.2,320.8 275.2,320.0 271.3,319.1 267.3,318.2 263.4,317.2 259.4,316.2 255.5,315.2 251.5,314.1 247.6,313.0 243.6,311.9 239.7,310.7 235.7,309.5 231.8,308.3 227.8,307.0 223.9,305.6 219.9,304.3 216.0,302.9 212.0,301.4 208.1,300.0 207.8,299.9 210.2,299.0 210.3,299.0 214.4,297.6 214.4,297.5 218.5,296.0 218.5,296.0 222.6,294.5 222.7,294.5 226.8,292.9 226.8,292.9 230.9,291.2 230.9,291.2 235.0,289.6 235.1,289.6 239.2,287.9 239.2,287.8 243.3,286.1 243.3,286.1 247.4,284.3 247.5,284.3 251.5,282.5 251.6,282.5 255.7,280.6 255.7,280.6 259.8,278.7 259.8,278.7 263.9,276.8 264.0,276.8 268.1,274.8 268.1,274.8 272.2,272.8 272.2,272.8 276.3,270.8 276.3,270.8 279.1,269.4 279.4,269.4 279.4,269.4 283.3,270.4 283.3,270.4 287.1,271.3 287.2,271.3 291.0,272.2 291.1,272.2 294.9,273.0 294.9,273.0 298.7,273.8 298.8,273.8 302.6,274.6 302.7,274.6 306.5,275.3 306.5,275.3 310.4,276.0 310.4,276.0 314.2,276.6 314.3,276.7 316.9,277.1 316.8,280.0 316.6,283.6 316.4,287.2 316.1,290.7 315.8,294.0 315.5,297.2ZM309.0,324.4 309.0,324.4 310.8,323.4 310.4,325.1 310.0,326.2 306.8,325.7 306.6,325.7 309.0,324.4ZM290.0,366.2 288.0,368.3 285.9,370.2 283.7,372.1 283.5,372.2 280.9,371.8 277.5,371.1 274.1,370.5 270.7,369.8 267.3,369.1 263.9,368.3 260.5,367.6 257.1,366.8 253.7,366.0 250.3,365.2 246.8,364.3 243.4,363.4 240.0,362.6 236.6,361.6 233.2,360.7 229.8,359.8 229.6,359.7 231.1,359.2 231.1,359.2 234.6,357.9 234.7,357.9 238.2,356.6 238.2,356.6 241.7,355.3 241.7,355.2 245.3,353.9 245.3,353.9 248.8,352.5 248.8,352.5 252.3,351.1 252.4,351.1 255.9,349.6 255.9,349.6 259.4,348.1 259.5,348.1 263.0,346.6 263.0,346.6 266.5,345.1 266.5,345.1 270.1,343.5 270.1,343.5 273.6,341.9 273.6,341.9 277.1,340.3 277.2,340.3 280.7,338.7 280.7,338.6 284.2,337.0 284.3,337.0 287.8,335.3 287.8,335.2 290.0,334.2 293.1,334.7 293.1,334.7 297.1,335.4 297.2,335.4 301.2,336.0 301.2,336.0 305.2,336.6 305.3,336.6 306.8,336.8 306.4,338.0 305.2,341.5 303.9,344.9 302.5,348.0 301.0,351.0 299.4,353.8 297.6,356.5 295.8,359.1 293.9,361.6 292.0,364.0 290.0,366.2Z"/>
<path fill="#f5a000" fill-rule="evenodd" d="M150.5,205.4 149.9,206.3 151.9,207.5 155.7,209.7 157.1,210.5 156.5,211.3 155.8,212.3 157.8,213.4 161.6,215.7 163.0,216.5 162.4,217.3 161.8,218.2 163.8,219.4 167.6,221.6 168.9,222.4 168.4,223.2 167.7,224.1 169.7,225.3 173.5,227.5 174.9,228.3 174.3,229.1 174.0,229.5 175.1,230.0 175.1,230.1 178.9,232.0 178.9,232.0 180.3,232.7 179.8,232.8 178.9,233.2 179.4,233.5 180.8,234.3 180.2,235.1 180.0,235.5 177.2,234.0 177.1,234.0 176.9,233.9 176.3,234.1 172.8,235.3 169.3,236.4 165.8,237.6 162.2,238.7 158.7,239.7 155.2,240.8 151.7,241.8 148.2,242.8 144.6,243.8 141.1,244.7 137.6,245.6 134.1,246.5 132.0,247.0 131.9,247.3 131.1,250.8 130.4,254.4 130.4,254.7 133.0,254.1 136.5,253.3 137.9,252.9 137.8,253.3 137.1,256.8 137.0,257.1 140.3,256.3 140.3,256.3 143.9,255.4 143.9,255.3 147.5,254.4 147.5,254.4 151.1,253.4 151.1,253.4 154.7,252.4 154.7,252.4 158.3,251.4 158.3,251.3 161.9,250.3 161.9,250.3 165.5,249.2 165.5,249.2 169.1,248.0 169.1,248.0 172.7,246.9 172.7,246.9 176.3,245.7 176.3,245.7 179.9,244.5 179.9,244.5 183.5,243.2 183.5,243.2 187.1,241.9 187.1,241.9 190.7,240.6 190.7,240.6 194.3,239.3 194.4,239.3 194.4,239.4 198.2,241.1 198.3,241.1 202.1,242.8 202.1,242.8 205.9,244.5 206.0,244.5 209.8,246.1 209.8,246.1 213.7,247.7 213.7,247.8 217.5,249.3 217.6,249.3 221.4,250.8 221.4,250.9 225.3,252.3 225.3,252.3 229.1,253.8 229.2,253.8 233.0,255.2 233.0,255.2 236.8,256.6 236.9,256.6 240.7,257.9 240.8,258.0 244.6,259.3 244.6,259.3 248.4,260.5 248.5,260.6 252.3,261.8 252.4,261.8 256.2,263.0 256.2,263.0 260.0,264.1 260.1,264.2 263.1,265.0 259.2,266.9 255.2,268.8 251.1,270.6 247.1,272.5 243.0,274.2 239.0,276.0 234.9,277.7 230.9,279.4 226.8,281.0 222.8,282.6 218.7,284.2 214.7,285.7 210.6,287.2 206.6,288.7 202.5,290.1 198.5,291.5 194.4,292.8 192.0,293.6 188.3,292.0 184.3,290.3 180.4,288.6 176.4,286.8 172.4,285.0 168.5,283.2 164.5,281.3 160.6,279.4 156.6,277.4 152.6,275.4 148.7,273.4 144.7,271.3 140.8,269.2 136.8,267.1 133.5,265.3 131.9,265.6 131.8,265.6 130.2,266.0 130.9,266.4 134.8,268.6 138.8,270.8 139.4,271.2 137.8,271.6 137.8,271.6 136.1,271.9 136.8,272.3 140.8,274.6 144.7,276.8 145.4,277.1 143.7,277.5 143.7,277.5 142.1,277.9 142.7,278.2 146.7,280.5 150.7,282.7 151.3,283.1 149.7,283.4 149.6,283.5 148.0,283.8 148.7,284.2 152.6,286.4 156.6,288.7 157.3,289.0 155.9,289.3 159.7,291.2 159.8,291.2 163.8,293.1 163.8,293.1 167.8,295.0 167.9,295.0 171.8,296.8 171.9,296.9 175.6,298.5 174.2,298.9 170.2,300.1 166.1,301.1 162.1,302.2 158.0,303.2 154.0,304.2 150.0,305.1 145.9,306.0 141.9,306.9 137.8,307.7 133.8,308.5 129.7,309.2 127.8,309.5 128.0,312.5 128.4,315.9 128.5,316.4 131.6,315.9 133.7,315.5 134.0,318.4 134.1,319.6 135.8,319.3 135.9,319.3 139.9,318.5 140.0,318.5 144.1,317.6 144.1,317.6 148.2,316.8 148.3,316.7 152.4,315.8 152.4,315.8 156.5,314.9 156.5,314.9 160.6,313.9 160.7,313.9 164.8,312.9 164.8,312.8 168.9,311.8 168.9,311.8 173.0,310.7 173.1,310.7 177.2,309.5 177.2,309.5 181.3,308.4 181.4,308.4 185.4,307.1 185.5,307.1 189.6,305.9 189.6,305.9 191.5,305.3 192.0,305.5 192.1,305.5 196.1,307.1 196.1,307.1 200.1,308.7 200.1,308.7 204.1,310.2 204.2,310.3 208.2,311.8 208.2,311.8 212.2,313.2 212.3,313.2 216.3,314.7 216.3,314.7 220.3,316.0 220.3,316.1 224.3,317.4 224.4,317.4 228.4,318.7 228.4,318.7 232.4,320.0 232.5,320.0 236.5,321.2 236.5,321.3 240.5,322.4 240.6,322.5 244.5,323.6 244.6,323.6 248.6,324.7 248.6,324.8 252.6,325.8 252.7,325.8 256.7,326.9 256.7,326.9 260.7,327.9 260.8,327.9 264.8,328.9 264.8,328.9 268.8,329.8 268.9,329.8 272.0,330.6 269.1,331.9 265.6,333.5 262.1,335.0 258.6,336.5 255.2,338.0 251.7,339.5 248.2,340.9 244.7,342.3 241.3,343.6 237.8,345.0 234.3,346.3 230.9,347.6 227.4,348.8 223.9,350.1 220.4,351.3 217.0,352.4 213.5,353.6 211.5,354.2 209.4,353.5 205.9,352.4 202.5,351.3 199.1,350.1 195.7,348.9 192.3,347.7 188.9,346.5 185.5,345.3 182.1,344.0 178.7,342.7 175.2,341.4 171.8,340.0 168.4,338.7 165.0,337.3 161.6,335.9 158.2,334.5 154.8,333.0 151.4,331.5 148.0,330.1 144.5,328.5 141.1,327.0 138.5,325.8 137.7,326.0 137.6,326.0 133.7,326.7 136.8,328.2 140.2,329.8 143.7,331.4 144.5,331.7 143.6,331.9 143.5,331.9 139.6,332.6 142.8,334.1 146.2,335.7 149.6,337.3 150.4,337.7 149.5,337.8 149.5,337.9 145.5,338.5 148.7,340.1 152.1,341.7 155.5,343.2 156.4,343.6 155.5,343.8 155.4,343.8 153.0,344.2 153.9,344.6 153.9,344.6 157.4,346.1 157.4,346.1 160.8,347.5 160.9,347.5 164.3,348.9 164.3,348.9 167.8,350.3 167.8,350.3 171.2,351.6 171.3,351.6 174.7,353.0 174.7,353.0 178.2,354.3 178.2,354.3 181.7,355.6 181.7,355.6 185.1,356.9 185.2,356.9 188.6,358.1 188.6,358.1 192.1,359.3 192.1,359.3 193.1,359.7 192.7,359.8 189.2,360.8 185.7,361.7 182.3,362.6 178.8,363.4 175.3,364.3 171.9,365.1 168.4,365.9 164.9,366.6 161.5,367.3 158.0,368.0 154.5,368.7 151.1,369.3 150.4,369.4 150.4,369.5 152.1,371.4 153.9,373.3 155.9,375.2 156.1,375.4 156.3,375.4 156.3,375.4 158.0,377.3 159.8,379.3 161.9,381.2 162.1,381.4 162.3,381.3 162.3,381.3 163.9,383.3 165.8,385.2 167.8,387.1 168.0,387.3 168.2,387.3 168.2,387.3 169.9,389.2 171.7,391.1 173.8,393.1 174.0,393.2 174.2,393.2 174.2,393.2 175.8,395.2 177.7,397.1 179.7,399.0 179.9,399.2 180.1,399.1 180.1,399.2 181.8,401.1 183.6,403.0 185.6,404.9 185.8,405.1 186.0,405.1 186.0,405.1 187.7,407.0 189.5,409.0 191.6,410.9 191.8,411.1 192.0,411.0 192.0,411.0 193.6,413.0 194.6,414.0 340.0,414.0 344.8,413.8 349.5,413.3 354.2,412.5 358.9,411.4 363.4,410.0 367.9,408.2 372.2,406.2 376.4,403.8 380.4,401.2 384.2,398.3 387.8,395.2 391.2,391.8 394.3,388.2 397.2,384.4 399.8,380.4 402.2,376.2 404.2,371.9 406.0,367.4 407.4,362.9 408.5,358.2 409.3,353.5 409.8,348.8 410.0,344.0 410.0,227.1 408.5,227.8 406.3,228.8 408.2,224.2 410.0,220.3 410.0,218.4 408.2,219.2 405.4,220.5 402.5,221.8 400.4,222.9 402.3,218.3 405.1,212.0 402.3,213.3 399.4,214.6 396.6,215.9 394.4,216.9 396.3,212.3 399.2,206.1 396.3,207.4 393.5,208.7 390.7,210.0 388.5,211.0 390.4,206.4 393.2,200.1 390.4,201.4 387.5,202.7 384.7,204.0 382.5,205.0 384.5,200.5 387.3,194.2 384.4,195.5 381.6,196.8 378.8,198.1 376.6,199.1 378.5,194.5 381.4,188.3 378.5,189.5 375.7,190.8 372.8,192.1 370.7,193.2 372.6,188.6 375.4,182.3 372.6,183.6 369.7,184.9 366.9,186.2 364.7,187.2 366.6,182.6 369.5,176.4 366.6,177.7 363.8,179.0 361.0,180.3 358.8,181.3 360.7,176.7 363.5,170.4 360.7,171.7 357.8,173.0 355.0,174.3 352.8,175.3 354.8,170.8 357.6,164.5 354.7,165.8 351.9,167.1 349.1,168.4 346.9,169.4 348.8,164.8 351.7,158.6 348.8,159.8 346.0,161.1 343.1,162.4 341.0,163.5 342.9,158.9 345.7,152.6 342.9,153.9 340.0,155.2 337.2,156.5 335.0,157.5 336.9,152.9 339.8,146.7 336.9,148.0 334.1,149.3 331.3,150.6 329.1,151.6 331.0,147.0 333.8,140.7 331.0,142.0 328.1,143.3 325.3,144.6 323.1,145.6 325.1,141.1 327.9,134.8 325.0,136.1 322.2,137.4 319.4,138.7 317.2,139.7 319.1,135.1 322.0,128.9 319.1,130.1 316.3,131.4 313.4,132.7 311.3,133.8 313.2,129.2 316.0,122.9 313.2,124.2 310.3,125.5 307.5,126.8 305.3,127.8 307.2,123.2 310.1,117.0 307.2,118.3 304.4,119.6 301.6,120.9 299.4,121.9 301.3,117.3 304.1,111.0 301.3,112.3 298.4,113.6 295.6,114.9 293.4,115.9 295.4,111.4 298.2,105.1 295.3,106.4 292.5,107.7 289.7,109.0 287.5,110.0 289.4,105.4 292.3,99.2 289.4,100.4 286.6,101.7 283.7,103.0 281.6,104.1 283.5,99.5 286.3,93.2 283.5,94.5 280.6,95.8 277.8,97.1 275.6,98.1 277.5,93.5 280.4,87.3 277.5,88.6 274.7,89.9 271.9,91.2 269.7,92.2 271.6,87.6 274.4,81.3 271.6,82.6 268.7,83.9 265.9,85.2 263.7,86.2 263.1,87.8 260.7,94.0 258.6,100.0 256.8,106.0 255.2,112.0 253.9,117.8 252.9,123.6 252.1,129.3 251.5,135.0 251.2,140.6 254.9,139.6 258.8,138.8 262.9,138.3 267.0,138.0 271.3,138.0 275.7,138.2 280.3,138.7 285.0,139.4 289.8,140.4 294.8,141.6 299.9,143.1 297.3,144.8 294.7,146.8 292.0,148.9 289.2,151.4 286.4,154.1 283.6,157.0 280.7,160.2 277.7,163.6 274.7,167.2 271.6,171.1 268.5,175.3 270.6,177.0 272.6,178.7 274.7,180.4 276.7,182.0 278.7,183.7 280.6,185.4 280.7,185.5 278.6,186.8 275.0,188.8 271.5,190.8 268.0,192.8 264.4,194.8 260.9,196.7 257.4,198.6 253.9,200.4 250.3,202.3 246.8,204.1 243.3,205.8 239.7,207.6 236.2,209.3 232.7,211.0 229.2,212.7 225.6,214.3 222.1,215.9 218.6,217.5 215.1,219.0 211.5,220.5 208.0,222.0 204.5,223.5 201.0,224.9 197.5,226.3 194.7,227.4 191.4,225.8 187.6,224.0 183.8,222.1 180.0,220.2 176.2,218.3 172.5,216.3 168.7,214.3 164.9,212.3 161.1,210.2 157.3,208.1 153.5,206.0 151.1,204.6 150.5,205.4ZM185.4,239.4 186.8,240.2 186.2,241.0 185.9,241.4 183.1,240.0 183.1,240.0 182.8,239.8 184.8,239.1 185.4,239.4ZM166.0,380.5 163.0,378.8 162.2,378.4 163.7,378.1 163.7,378.1 167.2,377.4 167.2,377.4 170.8,376.6 170.8,376.6 174.3,375.8 174.3,375.8 177.9,375.0 177.9,375.0 181.4,374.1 181.4,374.1 185.0,373.3 185.0,373.2 188.5,372.3 188.5,372.3 192.1,371.4 192.1,371.4 195.6,370.4 195.6,370.4 199.1,369.4 199.2,369.4 202.7,368.4 202.7,368.4 206.2,367.4 206.3,367.4 209.8,366.3 209.8,366.3 211.5,365.8 212.9,366.2 212.9,366.2 216.4,367.3 216.4,367.3 219.8,368.3 219.9,368.3 223.3,369.3 223.3,369.3 226.8,370.3 226.8,370.3 230.3,371.3 230.3,371.3 233.7,372.3 233.8,372.3 237.2,373.2 237.2,373.2 240.7,374.1 240.7,374.1 244.2,375.0 244.2,375.0 247.6,375.8 247.7,375.9 251.1,376.7 251.1,376.7 254.6,377.5 254.6,377.5 258.0,378.3 258.1,378.3 261.5,379.1 261.6,379.1 265.0,379.8 265.0,379.8 268.5,380.5 268.5,380.5 269.5,380.7 268.3,381.3 265.2,382.6 262.0,383.8 258.6,385.0 254.9,386.1 251.1,387.2 247.1,388.1 243.1,389.0 239.0,389.7 234.8,390.3 230.5,390.8 226.1,391.1 221.6,391.4 217.2,391.4 212.8,391.4 208.4,391.2 204.0,390.9 199.6,390.4 195.3,389.8 191.1,389.1 187.1,388.2 183.3,387.2 179.5,386.1 175.9,384.9 172.5,383.5 169.2,382.0 166.0,380.5ZM310.9,231.4 312.1,234.6 313.1,237.6 313.2,238.0 312.0,238.7 307.9,241.1 303.8,243.5 299.8,245.8 295.7,248.1 291.7,250.3 287.6,252.5 283.6,254.7 279.5,256.8 277.8,257.7 274.5,256.8 270.8,255.8 267.0,254.7 263.2,253.6 259.4,252.5 255.7,251.3 251.9,250.1 248.1,248.8 244.3,247.6 240.5,246.2 236.8,244.9 233.0,243.5 229.2,242.1 225.4,240.6 221.6,239.1 217.9,237.6 214.1,236.0 210.3,234.4 208.6,233.7 208.6,233.6 208.7,233.6 212.2,232.2 212.3,232.1 215.8,230.6 215.9,230.6 219.4,229.1 219.5,229.1 223.0,227.5 223.1,227.5 226.6,225.9 226.7,225.9 230.2,224.3 230.2,224.3 233.8,222.6 233.8,222.6 237.4,220.9 237.4,220.9 241.0,219.2 241.0,219.2 244.6,217.5 244.6,217.5 248.2,215.7 248.2,215.7 251.8,213.9 251.8,213.9 255.4,212.0 255.4,212.0 258.9,210.2 259.0,210.2 262.5,208.3 262.6,208.3 266.1,206.4 266.2,206.3 269.7,204.4 269.7,204.4 273.3,202.4 273.3,202.4 276.9,200.4 276.9,200.4 280.5,198.4 280.5,198.4 284.1,196.3 284.1,196.3 287.7,194.2 287.7,194.2 288.7,193.6 289.1,194.0 291.0,196.5 293.2,199.5 295.6,202.9 298.0,206.7 300.5,210.5 302.8,214.3 304.8,217.9 306.6,221.3 308.2,224.8 309.6,228.1 310.9,231.4ZM316.3,256.1 316.6,259.3 316.8,262.6 316.9,265.9 316.0,265.8 312.3,265.2 308.5,264.5 304.7,263.8 300.9,263.0 297.2,262.3 294.0,261.6 296.9,260.0 297.0,259.9 301.1,257.7 301.1,257.7 305.2,255.4 305.2,255.4 309.3,253.0 309.3,253.0 313.4,250.6 313.5,250.6 315.6,249.4 315.7,250.2 316.0,253.0 316.3,256.1ZM315.2,300.3 314.8,303.3 314.4,306.3 314.0,309.1 310.8,310.9 307.3,312.8 303.8,314.7 300.4,316.6 296.9,318.4 293.4,320.2 289.9,321.9 288.4,322.7 287.1,322.4 283.1,321.6 279.2,320.8 275.2,320.0 271.3,319.1 267.3,318.2 263.4,317.2 259.4,316.2 255.5,315.2 251.5,314.1 247.6,313.0 243.6,311.9 239.7,310.7 235.7,309.5 231.8,308.3 227.8,307.0 223.9,305.6 219.9,304.3 216.0,302.9 212.0,301.4 208.1,300.0 207.8,299.9 210.2,299.0 210.3,299.0 214.4,297.6 214.4,297.5 218.5,296.0 218.5,296.0 222.6,294.5 222.7,294.5 226.8,292.9 226.8,292.9 230.9,291.2 230.9,291.2 235.0,289.6 235.1,289.6 239.2,287.9 239.2,287.8 243.3,286.1 243.3,286.1 247.4,284.3 247.5,284.3 251.5,282.5 251.6,282.5 255.7,280.6 255.7,280.6 259.8,278.7 259.8,278.7 263.9,276.8 264.0,276.8 268.1,274.8 268.1,274.8 272.2,272.8 272.2,272.8 276.3,270.8 276.3,270.8 279.1,269.4 279.4,269.4 279.4,269.4 283.3,270.4 283.3,270.4 287.1,271.3 287.2,271.3 291.0,272.2 291.1,272.2 294.9,273.0 294.9,273.0 298.7,273.8 298.8,273.8 302.6,274.6 302.7,274.6 306.5,275.3 306.5,275.3 310.4,276.0 310.4,276.0 314.2,276.6 314.3,276.7 316.9,277.1 316.8,280.0 316.6,283.6 316.4,287.2 316.1,290.7 315.8,294.0 315.5,297.2 315.2,300.3ZM309.0,324.4 310.8,323.4 310.4,325.1 310.0,326.2 306.8,325.7 306.6,325.7 309.0,324.4 309.0,324.4ZM288.0,368.3 285.9,370.2 283.7,372.1 283.5,372.2 280.9,371.8 277.5,371.1 274.1,370.5 270.7,369.8 267.3,369.1 263.9,368.3 260.5,367.6 257.1,366.8 253.7,366.0 250.3,365.2 246.8,364.3 243.4,363.4 240.0,362.6 236.6,361.6 233.2,360.7 229.8,359.8 229.6,359.7 231.1,359.2 231.1,359.2 234.6,357.9 234.7,357.9 238.2,356.6 238.2,356.6 241.7,355.3 241.7,355.2 245.3,353.9 245.3,353.9 248.8,352.5 248.8,352.5 252.3,351.1 252.4,351.1 255.9,349.6 255.9,349.6 259.4,348.1 259.5,348.1 263.0,346.6 263.0,346.6 266.5,345.1 266.5,345.1 270.1,343.5 270.1,343.5 273.6,341.9 273.6,341.9 277.1,340.3 277.2,340.3 280.7,338.7 280.7,338.6 284.2,337.0 284.3,337.0 287.8,335.3 287.8,335.2 290.0,334.2 293.1,334.7 293.1,334.7 297.1,335.4 297.2,335.4 301.2,336.0 301.2,336.0 305.2,336.6 305.3,336.6 306.8,336.8 306.4,338.0 305.2,341.5 303.9,344.9 302.5,348.0 301.0,351.0 299.4,353.8 297.6,356.5 295.8,359.1 293.9,361.6 292.0,364.0 290.0,366.2 288.0,368.3ZM238.0,89.8 238.1,90.2 238.3,90.1 238.0,89.8ZM235.6,87.6 232.1,83.9 232.1,84.3 229.7,81.7 226.2,78.0 226.2,78.3 223.7,75.7 220.2,72.0 220.3,72.4 217.8,69.8 214.3,66.1 214.3,66.4 211.8,63.8 208.3,60.1 208.4,60.5 209.3,61.5 212.7,65.0 216.1,68.5 219.4,71.9 222.6,75.1 225.8,78.3 228.9,81.4 232.0,84.4 235.0,87.4 238.0,90.2 238.1,90.2 235.6,87.6Z"/></svg>
<div style="left:1362px;top:74px;width:1px;height:653px;background:#2e2e2e"></div>
<div style="left:1362px;top:28px;width:1px;height:33px;background:#3a3a3a"></div>

</body></html>
